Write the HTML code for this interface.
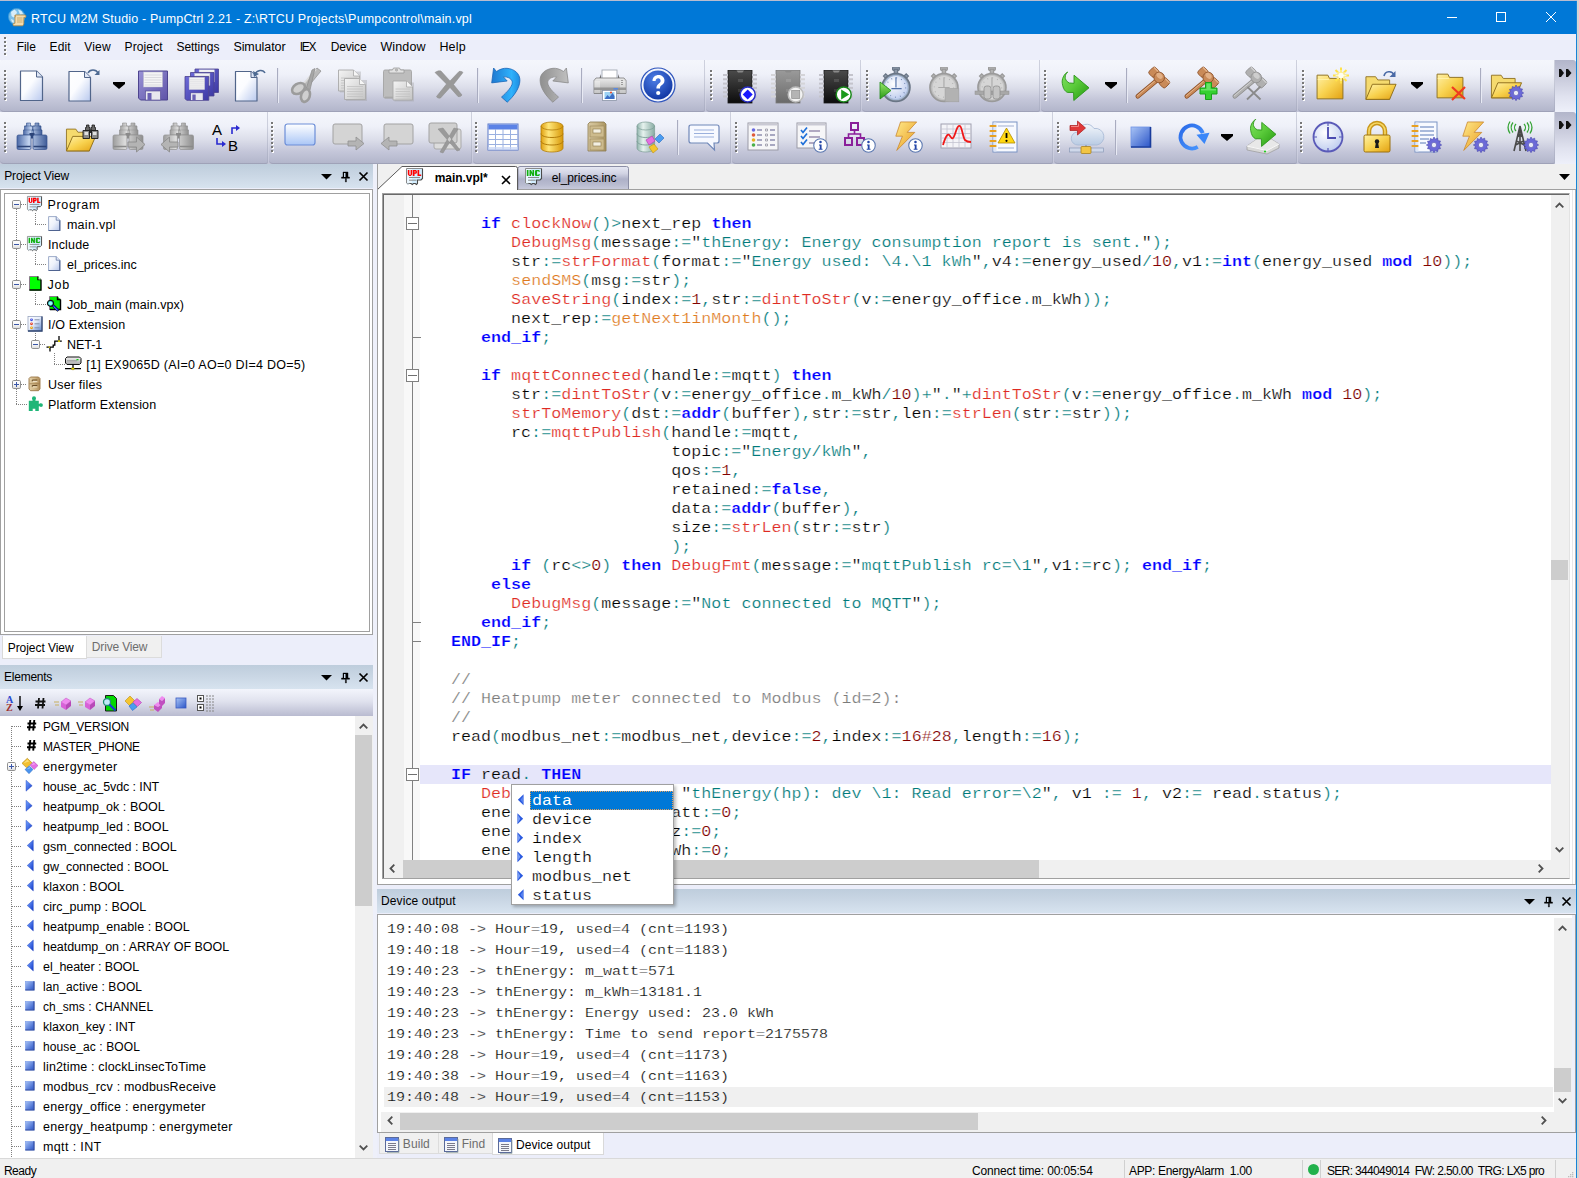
<!DOCTYPE html>
<html><head><meta charset="utf-8"><title>RTCU M2M Studio</title>
<style>
*{box-sizing:border-box;margin:0;padding:0}
html,body{width:1579px;height:1178px;overflow:hidden;background:#d4d4d4}
body{position:relative;font-family:"Liberation Sans",sans-serif;font-size:12.5px;letter-spacing:.25px;color:#000}
.abs,.win *{position:absolute}
.win{position:absolute;left:0;top:0;width:1577px;height:1178px;background:#eceefa;overflow:hidden}
svg{display:block;overflow:visible}
span{position:static !important}
/* top */
.strip{left:0;top:0;width:1579px;height:1px;background:#b9bccf}
.title{left:0;top:1px;width:1577px;height:33px;background:#0078d7}
.title .tt{left:31px;top:11px;color:#fff;font-size:12.5px;white-space:nowrap;letter-spacing:.18px}
.menubar{left:0;top:34px;width:1577px;height:26px;background:#eceefa}
.mi{white-space:nowrap}
.grip{width:3px;height:31px;background:repeating-linear-gradient(180deg,#777 0,#777 2px,transparent 2px,transparent 4px) 0 0/2px 100% no-repeat,repeating-linear-gradient(180deg,transparent 0,transparent 1px,#fff 1px,#fff 3px,transparent 3px,transparent 4px) 1px 0/2px 100% no-repeat}
.mgrip{left:4px;top:3px;width:3px;height:19px;background:repeating-linear-gradient(180deg,#777 0,#777 2px,transparent 2px,transparent 4px) 0 0/2px 100% no-repeat,repeating-linear-gradient(180deg,transparent 0,transparent 1px,#fff 1px,#fff 3px,transparent 3px,transparent 4px) 1px 0/2px 100% no-repeat}
.tbbg{left:0;top:60px;width:1577px;height:104px;background:linear-gradient(180deg,#f6f8fd 0,#eef0f8 13px,#dfe1ed 26px,#ced0e0 39px,#c4c6d9 51px,#c4c6d9 52px,#f6f8fd 52px,#eef0f8 65px,#dfe1ed 78px,#ced0e0 91px,#c4c6d9 104px)}
.band{background:linear-gradient(180deg,#f4f6fc 0%,#eff1f9 28%,#dcdeea 54%,#c4c6d9 78%,#b3b6cb 100%);border-radius:4px 0 2px 4px;border-bottom:1px solid #9fa2b8;box-shadow:inset -1px 0 0 rgba(160,163,185,.45)}
.tsep{width:1px;height:35px;background:#a9acc0;box-shadow:1px 0 0 #e8eaf4}
.tdd{width:12px;height:7px;background:#000;clip-path:polygon(0 0,100% 0,100% 28%,50% 100%,0 28%)}
.tic{width:32px;height:32px}
.chev{left:1555px;width:21px;background:linear-gradient(180deg,#b2b5ca 0%,#c9cbdc 35%,#e0e2ef 70%,#eef0fa 100%);border-radius:0 3px 0 0}
/* panels */
.phead{height:24px;background:linear-gradient(180deg,#becddc 0%,#c9d6e4 45%,#d7e3ef 100%)}
.phead .ph{white-space:nowrap}
.tl{white-space:nowrap;line-height:20px;height:20px}
.ti{width:16px;height:16px}
.exp{width:9px;height:9px}
.hdot{height:1px;background:repeating-linear-gradient(90deg,#808080 0,#808080 1px,transparent 1px,transparent 2px)}
.vdot{width:1px;background:repeating-linear-gradient(180deg,#808080 0,#808080 1px,transparent 1px,transparent 2px)}
/* editor */
.code{letter-spacing:0;font-family:"Liberation Mono",monospace;font-size:14.5px;white-space:pre}
.ln{-webkit-text-stroke:.22px #fff;left:36.6px;height:19px;line-height:20px;transform-origin:0 0;transform:scaleX(1.1505)}
.curln{left:36px;width:1131px;height:19px;background:#e6e6fa}
.kw{color:#0000ff;font-weight:bold}
.fr{color:#de2a22}
.fo{color:#de7a1e}
.st{color:#007a7a}
.op{color:#007a7a}
.nu{color:#800000}
.cm{color:#7a7a7a}
.fbox{left:22px;width:13px;height:13px;border:1px solid #808080;background:#fff}
.fbox:after{content:"";position:absolute;left:1px;top:5px;width:9px;height:1px;background:#707070}
.ftick{left:29px;width:8px;height:1px;background:#808080}
.sb{background:#f0f0f0}
.thumb{background:#cdcdcd}
.arr{font-size:10px;color:#505050}
/* output */
.ol{-webkit-text-stroke:.22px #fff;letter-spacing:0;left:387.2px;height:21px;line-height:21px;font-family:"Liberation Mono",monospace;font-size:13px;white-space:pre;transform-origin:0 0;transform:scaleX(1.1538)}
.olsel{left:384px;width:1169px;height:20px;background:#f0f0f0}
/* popup */
.popup{left:511px;top:784px;width:163px;height:121px;background:#fff;border:1px solid #a0a0a0;box-shadow:2px 2px 3px rgba(0,0,0,.25)}
.pi{left:5px;width:8px;height:12px}
.pt{-webkit-text-stroke:.22px #fff;letter-spacing:0;left:20px;height:19px;line-height:20px;font-family:"Liberation Mono",monospace;font-size:14.5px;white-space:pre;transform-origin:0 0;transform:scaleX(1.1494)}
.pt.psel{color:#fff;-webkit-text-stroke:0 transparent}
.pselbg{left:18px;width:143px;height:19px;background:#0078d7;outline:1px dotted #e0a060;outline-offset:-1px}
/* status */
.status{left:0;top:1158px;width:1577px;height:20px;background:#f0f0f0;border-top:1px solid #d9d9d9}
.status .sl{white-space:nowrap}

.u{-webkit-text-stroke:0 transparent}

</style></head>
<body>
<svg width="0" height="0" style="position:absolute"><defs>
<linearGradient id="gPage" x1="0" y1="0" x2="1" y2="1"><stop offset="0" stop-color="#fff"/><stop offset=".45" stop-color="#fbfcff"/><stop offset="1" stop-color="#b9c9ee"/></linearGradient>
<linearGradient id="gPageG" x1="0" y1="0" x2="1" y2="1"><stop offset="0" stop-color="#f4f4f4"/><stop offset="1" stop-color="#c4c4c4"/></linearGradient>
<linearGradient id="gPurple" x1="0" y1="0" x2="1" y2="1"><stop offset="0" stop-color="#9a93d6"/><stop offset="1" stop-color="#5e53a8"/></linearGradient>
<linearGradient id="gPurple2" x1="0" y1="0" x2="1" y2="1"><stop offset="0" stop-color="#6d6ad8"/><stop offset="1" stop-color="#3d39a4"/></linearGradient>
<linearGradient id="gBlue" x1="0" y1="0" x2="0" y2="1"><stop offset="0" stop-color="#5b9bea"/><stop offset="1" stop-color="#1d5fc4"/></linearGradient>
<linearGradient id="gUndo" x1="0" y1="0" x2="1" y2="0"><stop offset="0" stop-color="#1e78d0"/><stop offset=".7" stop-color="#2fb2fc"/><stop offset="1" stop-color="#1e8ce0"/></linearGradient>
<linearGradient id="gRedo" x1="0" y1="0" x2="1" y2="0"><stop offset="0" stop-color="#c0c0c0"/><stop offset=".6" stop-color="#a2a2a2"/><stop offset="1" stop-color="#909090"/></linearGradient>
<radialGradient id="gHelp" cx=".4" cy=".3" r=".8"><stop offset="0" stop-color="#4f7fe6"/><stop offset="1" stop-color="#0a2f9c"/></radialGradient>
<linearGradient id="gGold" x1="0" y1="0" x2="1" y2="1"><stop offset="0" stop-color="#fff1a8"/><stop offset=".5" stop-color="#f8d24f"/><stop offset="1" stop-color="#e2a112"/></linearGradient>
<linearGradient id="gGoldH" x1="0" y1="0" x2="1" y2="0"><stop offset="0" stop-color="#e0a010"/><stop offset=".35" stop-color="#ffe77a"/><stop offset="1" stop-color="#d89808"/></linearGradient>
<linearGradient id="gTealH" x1="0" y1="0" x2="1" y2="0"><stop offset="0" stop-color="#8fb3ab"/><stop offset=".35" stop-color="#e6f2ee"/><stop offset="1" stop-color="#87aba3"/></linearGradient>
<linearGradient id="gGray" x1="0" y1="0" x2="0" y2="1"><stop offset="0" stop-color="#ececec"/><stop offset="1" stop-color="#a6a6a6"/></linearGradient>
<linearGradient id="gGrayH" x1="0" y1="0" x2="1" y2="0"><stop offset="0" stop-color="#9c9c9c"/><stop offset=".4" stop-color="#dcdcdc"/><stop offset="1" stop-color="#8e8e8e"/></linearGradient>
<linearGradient id="gGreen" x1="0" y1="0" x2="0" y2="1"><stop offset="0" stop-color="#9ae86a"/><stop offset="1" stop-color="#2a9a18"/></linearGradient>
<linearGradient id="gSteelH" x1="0" y1="0" x2="1" y2="0"><stop offset="0" stop-color="#4a68a6"/><stop offset=".4" stop-color="#c3d4f0"/><stop offset="1" stop-color="#3f5c98"/></linearGradient>
<linearGradient id="gWood" x1="0" y1="0" x2="1" y2="1"><stop offset="0" stop-color="#e2b08a"/><stop offset="1" stop-color="#99552c"/></linearGradient>
<linearGradient id="gChip" x1="0" y1="0" x2="0" y2="1"><stop offset="0" stop-color="#4a4a4a"/><stop offset="1" stop-color="#0c0c0c"/></linearGradient>
<linearGradient id="gChipG" x1="0" y1="0" x2="0" y2="1"><stop offset="0" stop-color="#9a9a9a"/><stop offset="1" stop-color="#6a6a6a"/></linearGradient>
<linearGradient id="gRect" x1="0" y1="0" x2="0" y2="1"><stop offset="0" stop-color="#ffffff"/><stop offset="1" stop-color="#aac6f6"/></linearGradient>
<linearGradient id="gTan" x1="0" y1="0" x2="1" y2="0"><stop offset="0" stop-color="#d8c9a2"/><stop offset=".5" stop-color="#c9b789"/><stop offset="1" stop-color="#a8935f"/></linearGradient>
<radialGradient id="gClock" cx=".4" cy=".35" r=".7"><stop offset="0" stop-color="#ffffff"/><stop offset="1" stop-color="#bccbee"/></radialGradient>
<linearGradient id="gSq" x1="0" y1="0" x2="1" y2="1"><stop offset="0" stop-color="#a9c4f5"/><stop offset="1" stop-color="#2b55c8"/></linearGradient>
<linearGradient id="gBolt" x1="0" y1="0" x2="1" y2="1"><stop offset="0" stop-color="#ffe98a"/><stop offset="1" stop-color="#e89a1e"/></linearGradient>
<symbol id="sGear" viewBox="0 0 14 14"><path d="M7 0l1.2 1.9 2-.9.3 2.2 2.2.3-.9 2L13.700 7l-1.900 1.200.9 2-2.200.3-.3 2.200-2-.9L7 13.700 5.800 11.800l-2 .9-.3-2.200-2.200-.3.9-2L.300 7l1.900-1.200-.9-2 2.200-.3.3-2.200 2 .9z" fill="#6b69d8" stroke="#4442a8" stroke-width=".5"/><circle cx="7" cy="7" r="2.300" fill="#e9ebf7" stroke="#4442a8" stroke-width=".5"/></symbol>
<symbol id="sInfo" viewBox="0 0 14 14"><circle cx="7" cy="7" r="6.300" fill="#fff" stroke="#5b78b0" stroke-width="1"/><circle cx="7" cy="3.800" r="1.200" fill="#2446a8"/><path d="M5.600 6h2.400v4h.9v1H5.300v-1h1V7h-.7z" fill="#2446a8"/></symbol>
<symbol id="sBino" viewBox="0 0 32 32"><path d="M10.500 2h4v3h2v4h1v5h-10V9h1V5h2zM19 2h4v3h2v4h1v5h-10V9h1V5h2z" fill="url(#gSteelH)" stroke="#34508c" stroke-width=".6"/><path d="M8.500 5h8M17 5h8M7.500 9h10M16 9h10" stroke="#34508c" stroke-width=".6" opacity=".7"/><rect x="13.500" y="12" width="5" height="5.500" fill="#2c4478"/><path d="M1 15.500q0-1.500 1.500-1.500h11q1.500 0 1.500 1.500V27q0 1.500-1.500 1.500h-11q-1.500 0-1.500-1.500zM17 15.500q0-1.500 1.500-1.500h11q1.500 0 1.500 1.500V27q0 1.500-1.500 1.500h-11q-1.500 0-1.500-1.500z" fill="url(#gSteelH)" stroke="#34508c" stroke-width=".7"/><path d="M1.500 25.500h13M17.500 25.500h13" stroke="#2c4478" stroke-width="1.600"/></symbol>
<symbol id="sBinoG" viewBox="0 0 32 32"><path d="M10.500 2h4v3h2v4h1v5h-10V9h1V5h2zM19 2h4v3h2v4h1v5h-10V9h1V5h2z" fill="url(#gGrayH)" stroke="#909090" stroke-width=".6"/><path d="M8.500 5h8M17 5h8M7.500 9h10M16 9h10" stroke="#909090" stroke-width=".6" opacity=".7"/><rect x="13.500" y="12" width="5" height="5.500" fill="#8a8a8a"/><path d="M1 15.500q0-1.500 1.500-1.500h11q1.500 0 1.500 1.500V27q0 1.500-1.500 1.500h-11q-1.500 0-1.500-1.500zM17 15.500q0-1.500 1.500-1.500h11q1.500 0 1.500 1.500V27q0 1.500-1.500 1.500h-11q-1.500 0-1.500-1.500z" fill="url(#gGrayH)" stroke="#909090" stroke-width=".7"/><path d="M1.500 25.500h13M17.500 25.500h13" stroke="#8a8a8a" stroke-width="1.600"/></symbol>
<symbol id="sFolderOpen" viewBox="0 0 30 26"><path d="M1 3h9l2 3h11v18H1z" fill="#f5da6e" stroke="#96782a" stroke-width=".9"/><path d="M7 10h22l-6 14H1z" fill="url(#gGold)" stroke="#8f6e1c" stroke-width=".9"/></symbol>
<symbol id="sFolder" viewBox="0 0 26 24"><path d="M1 1h10l1.500 3h12.500v19H1z" fill="url(#gGold)" stroke="#8f7220" stroke-width=".9"/><path d="M1.500 5h10.500" stroke="#fff3b0" stroke-width=".8"/></symbol>
<symbol id="sGavel" viewBox="0 0 26 26"><path d="M2 23L15 8l2.500 2.200L4.500 25.200z" stroke-width=".6"/><path d="M11 5l5-4 9 9-4 5z" stroke-width=".6"/><path d="M13.500 3l9 9" stroke-width="1" fill="none" opacity=".35"/></symbol>
<symbol id="sWatch" viewBox="0 0 28 32"><rect x="11" y="0" width="6" height="3" rx="1"/><rect x="12.500" y="2" width="3" height="4"/><path d="M3 8l2-2 2 2-2 2zM25 8l-2-2-2 2 2 2z"/><circle cx="14" cy="18" r="12.300" stroke-width="1.400"/></symbol>
</defs></svg><div class="win">
<div class="strip"></div>
<div class="title">
  <div class="abs" style="left:8px;top:7px"><svg width="18" height="18" viewBox="0 0 18 18"><circle cx="8.700" cy="8.700" r="8.200" fill="#7cc0ea" stroke="#3e9ad6" stroke-width=".9"/><path d="M3 4l3.500-2.500 2.500 2.500-1 3-2.500 2.500L3.500 8zM10 1.500l3.500 1.500 1.500 3-3 .5zM3 11l2.500 1 .5 3-2-1z" fill="#e8f5fc" opacity=".85"/><path d="M7 7h10.500l.5 1.200-.5 1.200h-1.700V16l-1 1.800H5.500L5 16.500l.5-1.200H7z" fill="#f3dcae" stroke="#b88a42" stroke-width=".8"/><path d="M7 7q1.200 1.200 0 2.400" fill="none" stroke="#b88a42" stroke-width=".7"/><path d="M9 10h5.500M9 12h5.500M9 14h5.500" stroke="#caa566" stroke-width=".9"/></svg></div>
  <div class="tt">RTCU M2M Studio - PumpCtrl 2.21 - Z:\RTCU Projects\Pumpcontrol\main.vpl</div>
  <svg style="left:1443px;top:0" width="134" height="33" viewBox="0 0 134 33"><g stroke="#fff" stroke-width="1" fill="none"><path d="M4 16.5h10"/><rect x="53.5" y="11.5" width="9" height="9"/><path d="M103 11l10 10M113 11l-10 10"/></g></svg>
</div>
<div class="menubar"><div class="mgrip"></div>
<div class="mi" style="left:16.7px;top:6px;letter-spacing:-0.045px;font-size:12px;">File</div>
<div class="mi" style="left:49.6px;top:6px;letter-spacing:0.074px;font-size:12px;">Edit</div>
<div class="mi" style="left:84.2px;top:6px;letter-spacing:0.203px;font-size:12px;">View</div>
<div class="mi" style="left:124.6px;top:6px;letter-spacing:0.109px;font-size:12px;">Project</div>
<div class="mi" style="left:176.6px;top:6px;letter-spacing:-0.080px;font-size:12px;">Settings</div>
<div class="mi" style="left:233.4px;top:6px;letter-spacing:-0.074px;">Simulator</div>
<div class="mi" style="left:299.7px;top:6px;letter-spacing:-1.221px;font-size:12px;">IEX</div>
<div class="mi" style="left:330.7px;top:6px;letter-spacing:-0.156px;font-size:12px;">Device</div>
<div class="mi" style="left:380.4px;top:6px;letter-spacing:0.149px;">Window</div>
<div class="mi" style="left:439.4px;top:6px;letter-spacing:0.164px;">Help</div>
</div>
<div class="tbbg"></div>
<div class="band" style="left:0px;top:60px;width:705px;height:52px"></div>
<div class="band" style="left:706px;top:60px;width:155px;height:52px"></div>
<div class="band" style="left:862px;top:60px;width:178px;height:52px"></div>
<div class="band" style="left:1041px;top:60px;width:256px;height:52px"></div>
<div class="band" style="left:1298px;top:60px;width:257px;height:52px"></div><div class="band" style="left:0px;top:112px;width:268px;height:52px"></div>
<div class="band" style="left:269px;top:112px;width:203px;height:52px"></div>
<div class="band" style="left:473px;top:112px;width:258px;height:52px"></div>
<div class="band" style="left:732px;top:112px;width:321px;height:52px"></div>
<div class="band" style="left:1054px;top:112px;width:243px;height:52px"></div>
<div class="band" style="left:1298px;top:112px;width:257px;height:52px"></div>
<div class="chev" style="top:60px;height:52px"></div>
<div class="chev" style="top:112px;height:52px"></div>
<svg style="left:1559px;top:69px" width="13" height="8" viewBox="0 0 13 8"><path d="M0 0h2l3 4-3 4H0zM7 0h2l3.500 4L9 8H7z" fill="#111"/></svg>
<svg style="left:1559px;top:121px" width="13" height="8" viewBox="0 0 13 8"><path d="M0 0h2l3 4-3 4H0zM7 0h2l3.500 4L9 8H7z" fill="#111"/></svg>
<div class="grip" style="left:4px;top:70px"></div>
<div class="tic" style="left:16px;top:69px"><svg width="32" height="32" viewBox="0 0 32 32" preserveAspectRatio="none"><path d="M4.5 2h16l6 6v23.5H4.5z" fill="url(#gPage)" stroke="#51658a" stroke-width="1.200" stroke-linejoin="round"/><path d="M20.5 2v6h6" fill="#dfe7f7" stroke="#51658a" stroke-width="1"/></svg></div>
<div class="tic" style="left:68px;top:69px"><svg width="32" height="32" viewBox="0 0 32 32" preserveAspectRatio="none"><path d="M1 2.5h15.5l6 6v23.5H1z" fill="url(#gPage)" stroke="#51658a" stroke-width="1.200" stroke-linejoin="round"/><path d="M16.5 2.5v6h6" fill="#dfe7f7" stroke="#51658a" stroke-width="1"/><path d="M20 4c2-4 8-4 10 0" fill="none" stroke="#4e6a92" stroke-width="1.600"/><path d="M31.500 1v5h-5z" fill="#4e6a92"/></svg></div>
<div class="tdd" style="left:113px;top:82px"></div>
<div class="tic" style="left:137px;top:69px"><svg width="32" height="32" viewBox="0 0 32 32" preserveAspectRatio="none"><g transform="translate(1.5 2) scale(1)"><path d="M0 0h29v29H2l-2-2z" fill="url(#gPurple)" stroke="#4d448f" stroke-width="1"/><rect x="5" y="1" width="19" height="15" fill="#f4f4f4" stroke="#b8b8c8" stroke-width=".5"/><path d="M6 4h17M6 6.500h17M6 9h17M6 11.500h17M6 14h17" stroke="#cfcfd6" stroke-width=".7"/><rect x="7" y="20" width="15" height="9" fill="#e8e8ee" stroke="#4d448f" stroke-width=".6"/><rect x="9" y="22" width="4" height="7" fill="#6a60b4"/></g></svg></div>
<div class="tic" style="left:185px;top:69px"><svg width="32" height="32" viewBox="0 0 32 32" preserveAspectRatio="none"><g transform="translate(10 0) scale(0.81)"><path d="M0 0h29v29H2l-2-2z" fill="url(#gPurple2)" stroke="#4d448f" stroke-width="1"/><rect x="5" y="1" width="19" height="15" fill="#f4f4f4" stroke="#b8b8c8" stroke-width=".5"/><path d="M6 4h17M6 6.500h17M6 9h17M6 11.500h17M6 14h17" stroke="#cfcfd6" stroke-width=".7"/><rect x="7" y="20" width="15" height="9" fill="#e8e8ee" stroke="#4d448f" stroke-width=".6"/><rect x="9" y="22" width="4" height="7" fill="#6a60b4"/></g><g transform="translate(5.5 3.5) scale(0.81)"><path d="M0 0h29v29H2l-2-2z" fill="url(#gPurple2)" stroke="#4d448f" stroke-width="1"/><rect x="5" y="1" width="19" height="15" fill="#f4f4f4" stroke="#b8b8c8" stroke-width=".5"/><path d="M6 4h17M6 6.500h17M6 9h17M6 11.500h17M6 14h17" stroke="#cfcfd6" stroke-width=".7"/><rect x="7" y="20" width="15" height="9" fill="#e8e8ee" stroke="#4d448f" stroke-width=".6"/><rect x="9" y="22" width="4" height="7" fill="#6a60b4"/></g><g transform="translate(0 7.5) scale(0.82)"><path d="M0 0h29v29H2l-2-2z" fill="url(#gPurple2)" stroke="#4d448f" stroke-width="1"/><rect x="5" y="1" width="19" height="15" fill="#f4f4f4" stroke="#b8b8c8" stroke-width=".5"/><path d="M6 4h17M6 6.500h17M6 9h17M6 11.500h17M6 14h17" stroke="#cfcfd6" stroke-width=".7"/><rect x="7" y="20" width="15" height="9" fill="#e8e8ee" stroke="#4d448f" stroke-width=".6"/><rect x="9" y="22" width="4" height="7" fill="#6a60b4"/></g></svg></div>
<div class="tic" style="left:234px;top:69px"><svg width="32" height="32" viewBox="0 0 32 32" preserveAspectRatio="none"><path d="M1.5 2.5h15.5l6 6v23.5H1.5z" fill="url(#gPage)" stroke="#51658a" stroke-width="1.200" stroke-linejoin="round"/><path d="M17 2.5v6h6" fill="#dfe7f7" stroke="#51658a" stroke-width="1"/><path d="M21 5c2-4 8-5 10-1" fill="none" stroke="#4e6a92" stroke-width="1.500"/><path d="M19 2l1 6 5-3z" fill="#4e6a92"/></svg></div>
<div class="tsep" style="left:277px;top:68px"></div>
<div class="tic" style="left:290px;top:69px"><svg width="32" height="32" viewBox="0 0 32 32" preserveAspectRatio="none"><g stroke="#8c8c8c" stroke-width=".7"><path d="M27 -1l4 3L17 19l-4-2.500z" fill="#b9b9b9"/><path d="M25 0l2 .5L12 18l-1.500-1z" fill="#dcdcdc" stroke="none"/><path d="M22 1l3-1.500L20 21l-4.500 1z" fill="#a6a6a6"/><ellipse cx="8.500" cy="19.500" rx="7" ry="4.800" transform="rotate(-32 8.500 19.500)" fill="#cfcfcf" stroke="#9c9c9c" stroke-width="2.600"/><ellipse cx="15.500" cy="26.500" rx="4.300" ry="6.500" transform="rotate(18 15.500 26.500)" fill="#cfcfcf" stroke="#9c9c9c" stroke-width="2.600"/></g></svg></div>
<div class="tic" style="left:338px;top:69px"><svg width="32" height="32" viewBox="0 0 32 32" preserveAspectRatio="none"><path d="M2 2.5h21v21h-21z" fill="#9a9a9a" opacity=".35"/><path d="M0.5 1h15l6 6v15H0.5z" fill="url(#gPageG)" stroke="#a9a9a9" stroke-width=".9"/><path d="M15.5 1v6h6" fill="#f6f6f6" stroke="#a9a9a9" stroke-width=".8"/><path d="M3 9h16M3 11.5h16M3 14h16M3 16.5h16M3 19h16" stroke="#c2c2c2" stroke-width=".8"/><path d="M8 11h21v21h-21z" fill="#9a9a9a" opacity=".35"/><path d="M6.5 9.5h15l6 6v15H6.5z" fill="url(#gPageG)" stroke="#a9a9a9" stroke-width=".9"/><path d="M21.5 9.5v6h6" fill="#f6f6f6" stroke="#a9a9a9" stroke-width=".8"/><path d="M9 17.5h16M9 20h16M9 22.5h16M9 25h16M9 27.5h16" stroke="#c2c2c2" stroke-width=".8"/></svg></div>
<div class="tic" style="left:386px;top:69px"><svg width="32" height="32" viewBox="0 0 32 32" preserveAspectRatio="none"><rect x="-2.500" y="1" width="28" height="28" rx="1.500" fill="#bdbdbd" stroke="#a4a4a4" stroke-width=".9"/><rect x="-1" y="27.500" width="27" height="2" fill="#a0a0a0" opacity=".5"/><path d="M7.500 -1h6l1 2h3.500v3H3V1h3.500z" fill="#e2e2e2" stroke="#9a9a9a" stroke-width=".8"/><circle cx="10.500" cy="1" r="1.200" fill="#bdbdbd" stroke="#9a9a9a" stroke-width=".5"/><path d="M8.5 13.5h19.5v19h-19.5z" fill="#9a9a9a" opacity=".35"/><path d="M7 12h13.5l6 6v13H7z" fill="url(#gPageG)" stroke="#a9a9a9" stroke-width=".9"/><path d="M20.5 12v6h6" fill="#f6f6f6" stroke="#a9a9a9" stroke-width=".8"/><path d="M9.5 20h14.5M9.5 22.5h14.5M9.5 25h14.5M9.5 27.5h14.5M9.5 30h14.5" stroke="#c2c2c2" stroke-width=".8"/></svg></div>
<div class="tic" style="left:434px;top:69px"><svg width="32" height="32" viewBox="0 0 32 32" preserveAspectRatio="none"><path d="M1 3.500c2-1.500 4-2 6-1.500L16 12l9-9.500c1.500-.5 3 0 4 1L19.500 15.500 28 26c-1 1.500-2.500 2-4 1.500L16 18.500 6.500 29C5 29.500 3 29 2.500 27.500L12.500 15z" fill="#999" stroke="#8a8a8a" stroke-width=".5"/></svg></div>
<div class="tsep" style="left:477px;top:68px"></div>
<div class="tic" style="left:490px;top:69px"><svg width="32" height="32" viewBox="0 0 32 32" preserveAspectRatio="none"><g transform="translate(0 -1)"><path d="M3.600 0L6.500 3.500C10 1 14 0 17 .3C25 1 30 6 29.900 12.400C29.800 20 24 28 17.200 34.200L11.500 29.100C17 24 22 19 22.300 14.900C22.500 11 18 8.500 13.400 8.900L17.200 13L1.700 14.900Z" fill="url(#gUndo)" stroke="#1a66b8" stroke-width=".8" stroke-linejoin="round"/></g></svg></div>
<div class="tic" style="left:538px;top:69px"><svg width="32" height="32" viewBox="0 0 32 32" preserveAspectRatio="none"><g transform="translate(32 -1) scale(-1 1)"><path d="M3.600 0L6.500 3.500C10 1 14 0 17 .3C25 1 30 6 29.900 12.400C29.800 20 24 28 17.200 34.200L11.500 29.100C17 24 22 19 22.300 14.900C22.500 11 18 8.500 13.400 8.900L17.200 13L1.700 14.900Z" fill="url(#gRedo)" stroke="#8a8a8a" stroke-width=".8" stroke-linejoin="round"/></g></svg></div>
<div class="tsep" style="left:581px;top:68px"></div>
<div class="tic" style="left:594px;top:69px"><svg width="32" height="32" viewBox="0 0 32 32" preserveAspectRatio="none"><rect x="8" y="1" width="15" height="10" fill="#fff" stroke="#9aa0aa" stroke-width=".8"/><path d="M5.500 9L7 5v4zM25.500 9L24 5v4z" fill="#6a6a6a"/><path d="M2 9h28l2 2.500V24.500H0V11.500z" fill="url(#gGray)" stroke="#7c7c7c" stroke-width=".8"/><path d="M0 12h6v12H0zM26 12h6v12h-6z" fill="#fff" opacity=".35"/><rect x="0" y="18.500" width="32" height="2.500" fill="#8a8a8a" opacity=".8"/><rect x="19.500" y="19" width="4.500" height="1.600" fill="#5a8ae0"/><path d="M27 11.500h2M27 13.500h2M27 15.500h2" stroke="#8a8a8a" stroke-width=".8"/><rect x="8.500" y="21.500" width="14" height="10" fill="#fff" stroke="#8a93a6" stroke-width=".8"/><rect x="10.500" y="23" width="10" height="7" fill="#9cd2f4"/><path d="M10.500 30l3-4 2 2 3-4 2 3v3z" fill="#3d6fc6"/><circle cx="17" cy="23.500" r="1.100" fill="#e85030"/></svg></div>
<div class="tic" style="left:642px;top:69px"><svg width="32" height="32" viewBox="0 0 32 32" preserveAspectRatio="none"><circle cx="16" cy="16" r="17" fill="#f2f5fd" stroke="#2f55bc" stroke-width="1.200"/><circle cx="16" cy="16" r="14.500" fill="url(#gHelp)"/><path d="M10.500 12c0-4 3-6 6-6s6 2 6 5.500c0 3-2 4-3.200 5-1 .8-1.300 1.500-1.300 3h-3.600c0-2.500.6-3.600 2.200-4.800 1.300-1 2-1.600 2-3 0-1.500-1-2.400-2.400-2.400-1.600 0-2.500 1-2.600 2.700z" fill="#fff"/><circle cx="16.200" cy="24" r="2.100" fill="#fff"/></svg></div>
<div class="grip" style="left:710px;top:70px"></div>
<div class="tic" style="left:725px;top:69px"><svg width="32" height="32" viewBox="0 0 32 32" preserveAspectRatio="none"><g transform="translate(1 0)"><rect x="2" y="1.500" width="24" height="32.500" fill="url(#gChip)" stroke="#1a1a1a" stroke-width=".8"/><path d="M10.500 1.500l1.500 2h4.500l1.500-2z" fill="#8a8a8a"/><rect x="-3" y="5" width="5" height="2" fill="#c4c4cc"/><rect x="26" y="5" width="5" height="2" fill="#c4c4cc"/><rect x="-3" y="9.3" width="5" height="2" fill="#c4c4cc"/><rect x="26" y="9.3" width="5" height="2" fill="#c4c4cc"/><rect x="-3" y="13.6" width="5" height="2" fill="#c4c4cc"/><rect x="26" y="13.6" width="5" height="2" fill="#c4c4cc"/><rect x="-3" y="17.9" width="5" height="2" fill="#c4c4cc"/><rect x="26" y="17.9" width="5" height="2" fill="#c4c4cc"/><rect x="-3" y="22.2" width="5" height="2" fill="#c4c4cc"/><rect x="26" y="22.2" width="5" height="2" fill="#c4c4cc"/><rect x="-3" y="26.5" width="5" height="2" fill="#c4c4cc"/><rect x="26" y="26.5" width="5" height="2" fill="#c4c4cc"/><rect x="12" y="10" width="5" height="3" fill="#ffffff" opacity=".12"/><rect x="12" y="20" width="5" height="3" fill="#ffffff" opacity=".1"/></g><circle cx="22.700" cy="25.500" r="7.500" fill="#fff" stroke="#2a2fc8" stroke-width="1.500"/><path d="M22.700 20.500l5 5-5 5-5-5z" fill="#1a1aff"/></svg></div>
<div class="tic" style="left:773px;top:69px"><svg width="32" height="32" viewBox="0 0 32 32" preserveAspectRatio="none"><g transform="translate(1 0)"><rect x="2" y="1.500" width="24" height="32.500" fill="url(#gChipG)" stroke="#7a7a7a" stroke-width=".8"/><path d="M10.500 1.500l1.500 2h4.500l1.500-2z" fill="#8a8a8a"/><rect x="-3" y="5" width="5" height="2" fill="#d4d4d8"/><rect x="26" y="5" width="5" height="2" fill="#d4d4d8"/><rect x="-3" y="9.3" width="5" height="2" fill="#d4d4d8"/><rect x="26" y="9.3" width="5" height="2" fill="#d4d4d8"/><rect x="-3" y="13.6" width="5" height="2" fill="#d4d4d8"/><rect x="26" y="13.6" width="5" height="2" fill="#d4d4d8"/><rect x="-3" y="17.9" width="5" height="2" fill="#d4d4d8"/><rect x="26" y="17.9" width="5" height="2" fill="#d4d4d8"/><rect x="-3" y="22.2" width="5" height="2" fill="#d4d4d8"/><rect x="26" y="22.2" width="5" height="2" fill="#d4d4d8"/><rect x="-3" y="26.5" width="5" height="2" fill="#d4d4d8"/><rect x="26" y="26.5" width="5" height="2" fill="#d4d4d8"/><rect x="12" y="10" width="5" height="3" fill="#ffffff" opacity=".12"/><rect x="12" y="20" width="5" height="3" fill="#ffffff" opacity=".1"/></g><circle cx="22.700" cy="25.500" r="7.500" fill="#f2f2f2" stroke="#bcbcbc" stroke-width="1.500"/><rect x="18.700" y="21.500" width="8" height="8" fill="#b4b4b4" stroke="#8e8e8e" stroke-width=".7"/></svg></div>
<div class="tic" style="left:821px;top:69px"><svg width="32" height="32" viewBox="0 0 32 32" preserveAspectRatio="none"><g transform="translate(1 0)"><rect x="2" y="1.500" width="24" height="32.500" fill="url(#gChip)" stroke="#1a1a1a" stroke-width=".8"/><path d="M10.500 1.500l1.500 2h4.500l1.500-2z" fill="#8a8a8a"/><rect x="-3" y="5" width="5" height="2" fill="#c4c4cc"/><rect x="26" y="5" width="5" height="2" fill="#c4c4cc"/><rect x="-3" y="9.3" width="5" height="2" fill="#c4c4cc"/><rect x="26" y="9.3" width="5" height="2" fill="#c4c4cc"/><rect x="-3" y="13.6" width="5" height="2" fill="#c4c4cc"/><rect x="26" y="13.6" width="5" height="2" fill="#c4c4cc"/><rect x="-3" y="17.9" width="5" height="2" fill="#c4c4cc"/><rect x="26" y="17.9" width="5" height="2" fill="#c4c4cc"/><rect x="-3" y="22.2" width="5" height="2" fill="#c4c4cc"/><rect x="26" y="22.2" width="5" height="2" fill="#c4c4cc"/><rect x="-3" y="26.5" width="5" height="2" fill="#c4c4cc"/><rect x="26" y="26.5" width="5" height="2" fill="#c4c4cc"/><rect x="12" y="10" width="5" height="3" fill="#ffffff" opacity=".12"/><rect x="12" y="20" width="5" height="3" fill="#ffffff" opacity=".1"/></g><circle cx="22.700" cy="25.500" r="7.500" fill="#fff" stroke="#1c8a1c" stroke-width="1.500"/><path d="M20.200 20.500l8 5-8 5z" fill="#1a9a1a"/></svg></div>
<div class="grip" style="left:866px;top:70px"></div>
<div class="tic" style="left:880px;top:69px"><svg width="32" height="32" viewBox="0 0 32 32" preserveAspectRatio="none"><g transform="translate(0 -2) scale(1.140)"><use href="#sWatch" width="28" height="32" fill="#8c98a8" stroke="#6a7686"/><circle cx="14" cy="18" r="10.500" fill="url(#gClock)" stroke="#a9bcd8" stroke-width="1"/><path d="M14 9v9M10 19h9" stroke="#5070a8" stroke-width="1"/><circle cx="14" cy="18" r="8.500" fill="none" stroke="#6f86b0" stroke-width="1" stroke-dasharray=".8 3.650"/></g><path d="M0 13l11 8.500-11 8.500z" fill="url(#gGreen)" stroke="#1f8a14" stroke-width=".8"/></svg></div>
<div class="tic" style="left:928px;top:69px"><svg width="32" height="32" viewBox="0 0 32 32" preserveAspectRatio="none"><g transform="translate(0 -2) scale(1.140)"><use href="#sWatch" width="28" height="32" fill="#b2b2b2" stroke="#9a9a9a"/><circle cx="14" cy="18" r="10.500" fill="#d6d6d6" stroke="#c4c4c4" stroke-width="1"/><path d="M14 9v9M9 18h10" stroke="#aaa" stroke-width="1"/><circle cx="14" cy="18" r="8.500" fill="none" stroke="#b0b0b0" stroke-width="1" stroke-dasharray=".8 3.650"/><rect x="15" y="19" width="12" height="11.500" fill="#b2b2b2" stroke="#a2a2a2" stroke-width=".6"/></g></svg></div>
<div class="tic" style="left:976px;top:69px"><svg width="32" height="32" viewBox="0 0 32 32" preserveAspectRatio="none"><g transform="translate(0 -2) scale(1.140)"><use href="#sWatch" width="28" height="32" fill="#b2b2b2" stroke="#9a9a9a"/><circle cx="14" cy="18" r="10.500" fill="#d6d6d6" stroke="#c4c4c4" stroke-width="1"/><path d="M14 9v9" stroke="#aaa" stroke-width="1"/><circle cx="14" cy="18" r="8.500" fill="none" stroke="#b0b0b0" stroke-width="1" stroke-dasharray=".8 3.650"/></g><rect x="-1" y="22" width="34" height="3.500" fill="#a8a8a8" stroke="#909090" stroke-width=".5"/><rect x="8" y="17" width="7" height="13" rx="2.500" fill="#c4c4c4" stroke="#8e8e8e" stroke-width=".8"/><rect x="17" y="17" width="7" height="13" rx="2.500" fill="#c4c4c4" stroke="#8e8e8e" stroke-width=".8"/></svg></div>
<div class="grip" style="left:1044px;top:70px"></div>
<div class="tic" style="left:1059px;top:69px"><svg width="32" height="32" viewBox="0 0 32 32" preserveAspectRatio="none"><defs><linearGradient id="gGo" x1="0" y1="0" x2="1" y2="1"><stop offset="0" stop-color="#7ee060"/><stop offset=".45" stop-color="#5ccc3c"/><stop offset="1" stop-color="#22980e"/></linearGradient></defs><path d="M8.700 3C5 5 2.500 10 3.300 14.500C4 19.500 6 22.500 8.500 23.400L14.600 23.500L14.800 31.500L30 18.800L15 6.200L15 14.300L10.200 14C7.500 12.500 6 10 6.200 8.200C6.300 6 7 4.500 8.700 3Z" fill="url(#gGo)" stroke="#2a9418" stroke-width=".9" stroke-linejoin="round"/></svg></div>
<div class="tdd" style="left:1105px;top:82px"></div>
<div class="tsep" style="left:1126px;top:68px"></div>
<div class="tic" style="left:1136px;top:69px"><svg width="32" height="32" viewBox="0 0 32 32" preserveAspectRatio="none"><path d="M1.800 27.300L19.500 12.500" stroke="#8a4e26" stroke-width="4.600" stroke-linecap="round"/><path d="M1.800 27.300L19.500 12.500" stroke="#c98a58" stroke-width="3" stroke-linecap="round"/><path d="M1.500 26.600L18.500 12.300" stroke="#ecc09a" stroke-width="1" stroke-linecap="round" opacity=".8"/><g transform="translate(23.200 8.500) rotate(45)"><rect x="-11.500" y="-4.500" width="8" height="9" rx="2.200" fill="#c98a58" stroke="#8a4e26" stroke-width=".8"/><rect x="3.500" y="-4.500" width="8" height="9" rx="2.200" fill="#c98a58" stroke="#8a4e26" stroke-width=".8"/><circle cx="0" cy="0" r="5.300" fill="#c98a58" stroke="#8a4e26" stroke-width=".8"/><ellipse cx="-1" cy="-1.500" rx="3.500" ry="2.500" fill="#ecc09a" opacity=".7"/><path d="M-11 -3.500h6M5 -3.500h6" stroke="#ecc09a" stroke-width="1.200" opacity=".8"/></g></svg></div>
<div class="tic" style="left:1185px;top:69px"><svg width="32" height="32" viewBox="0 0 32 32" preserveAspectRatio="none"><path d="M1.800 27.300L19.500 12.500" stroke="#8a4e26" stroke-width="4.600" stroke-linecap="round"/><path d="M1.800 27.300L19.500 12.500" stroke="#c98a58" stroke-width="3" stroke-linecap="round"/><path d="M1.500 26.600L18.500 12.300" stroke="#ecc09a" stroke-width="1" stroke-linecap="round" opacity=".8"/><g transform="translate(23.200 8.500) rotate(45)"><rect x="-11.500" y="-4.500" width="8" height="9" rx="2.200" fill="#c98a58" stroke="#8a4e26" stroke-width=".8"/><rect x="3.500" y="-4.500" width="8" height="9" rx="2.200" fill="#c98a58" stroke="#8a4e26" stroke-width=".8"/><circle cx="0" cy="0" r="5.300" fill="#c98a58" stroke="#8a4e26" stroke-width=".8"/><ellipse cx="-1" cy="-1.500" rx="3.500" ry="2.500" fill="#ecc09a" opacity=".7"/><path d="M-11 -3.500h6M5 -3.500h6" stroke="#ecc09a" stroke-width="1.200" opacity=".8"/></g><path d="M20.500 13.500h6v5.500h5.500v6h-5.500v5.500h-6v-5.500h-5.500v-6h5.500z" fill="#35d030" stroke="#18a018" stroke-width="1"/><path d="M21.500 14.500h4v5.500h5.500v1.500h-15v-1.500h5.500z" fill="#8af088" opacity=".6"/></svg></div>
<div class="tic" style="left:1233px;top:69px"><svg width="32" height="32" viewBox="0 0 32 32" preserveAspectRatio="none"><path d="M1.800 27.300L19.500 12.500" stroke="#8e8e8e" stroke-width="4.600" stroke-linecap="round"/><path d="M1.800 27.300L19.500 12.500" stroke="#b0b0b0" stroke-width="3" stroke-linecap="round"/><path d="M1.500 26.600L18.500 12.300" stroke="#dcdcdc" stroke-width="1" stroke-linecap="round" opacity=".8"/><g transform="translate(23.200 8.500) rotate(45)"><rect x="-11.500" y="-4.500" width="8" height="9" rx="2.200" fill="#b0b0b0" stroke="#8e8e8e" stroke-width=".8"/><rect x="3.500" y="-4.500" width="8" height="9" rx="2.200" fill="#b0b0b0" stroke="#8e8e8e" stroke-width=".8"/><circle cx="0" cy="0" r="5.300" fill="#b0b0b0" stroke="#8e8e8e" stroke-width=".8"/><ellipse cx="-1" cy="-1.500" rx="3.500" ry="2.500" fill="#dcdcdc" opacity=".7"/><path d="M-11 -3.500h6M5 -3.500h6" stroke="#dcdcdc" stroke-width="1.200" opacity=".8"/></g><path d="M14.500 18l13 12.500M27.500 17.500L14 30.500" stroke="#8a8a8a" stroke-width="1.800"/></svg></div>
<div class="grip" style="left:1302px;top:70px"></div>
<div class="tic" style="left:1315px;top:69px"><svg width="32" height="32" viewBox="0 0 32 32" preserveAspectRatio="none"><use href="#sFolder" x="1" y="5" width="28" height="26"/><path d="M26 -1.500v16M18 6.500h16M20.500 1l11 11M31.500 1l-11 11" stroke="#ffe24a" stroke-width="2"/><path d="M26 1v11M20.500 6.500h11M22.500 3l7 7M29.500 3l-7 7" stroke="#fff8c8" stroke-width="1"/><circle cx="26" cy="6.500" r="2.800" fill="#fffef0"/></svg></div>
<div class="tic" style="left:1364px;top:69px"><svg width="32" height="32" viewBox="0 0 32 32" preserveAspectRatio="none"><use href="#sFolderOpen" x="-1" y="4.500" width="36" height="28"/><path d="M20 7c1-5 8-6 10-1" fill="none" stroke="#4a6aa6" stroke-width="1.600"/><path d="M31.500 2v6h-6z" fill="#4a6aa6"/></svg></div>
<div class="tdd" style="left:1411px;top:82px"></div>
<div class="tic" style="left:1436px;top:69px"><svg width="32" height="32" viewBox="0 0 32 32" preserveAspectRatio="none"><use href="#sFolder" x="0" y="4" width="28" height="26"/><path d="M16 18l13 12M29 18L16 31" stroke="#f03a20" stroke-width="2.200"/></svg></div>
<div class="tsep" style="left:1480px;top:68px"></div>
<div class="tic" style="left:1492px;top:69px"><svg width="32" height="32" viewBox="0 0 32 32" preserveAspectRatio="none"><use href="#sFolderOpen" x="-2" y="3" width="33" height="28"/><use href="#sGear" x="16" y="16" width="16" height="16"/></svg></div>
<div class="grip" style="left:4px;top:122px"></div>
<div class="tic" style="left:16px;top:121px"><svg width="32" height="32" viewBox="0 0 32 32" preserveAspectRatio="none"><use href="#sBino" x="0" y="0" width="32" height="32"/></svg></div>
<div class="tic" style="left:64px;top:121px"><svg width="32" height="32" viewBox="0 0 32 32" preserveAspectRatio="none"><use href="#sFolderOpen" x="0" y="5" width="34" height="27"/><g transform="translate(18.500 3.500) scale(.5)"><path d="M8 1h5v5h2v6H6V6h2zM19 1h5v5h2v6h-9V6h2z" fill="#666" stroke="#1a1a1a" stroke-width="1.600"/><rect x="13" y="10" width="6" height="7" fill="#2a2a2a"/><path d="M1 12h13v16H1zM18 12h13v16H18z" fill="#8a8a8a" stroke="#1a1a1a" stroke-width="1.800"/><path d="M4 15h7v6H4zM21 15h7v6h-7z" fill="#e0e0e0"/></g></svg></div>
<div class="tic" style="left:112px;top:121px"><svg width="32" height="32" viewBox="0 0 32 32" preserveAspectRatio="none"><use href="#sBinoG" x="0" y="0" width="32" height="32"/><path d="M16 21h8.500v-5l8.500 7.500-8.500 7.500v-5H16z" fill="#b4b4b4" stroke="#8c8c8c" stroke-width=".9"/></svg></div>
<div class="tic" style="left:161px;top:121px"><svg width="32" height="32" viewBox="0 0 32 32" preserveAspectRatio="none"><use href="#sBinoG" x="1.500" y="0" width="32" height="32"/><path d="M17 21H8.500v-5L0 23.500l8.500 7.500v-5H17z" fill="#b4b4b4" stroke="#8c8c8c" stroke-width=".9"/></svg></div>
<div class="tic" style="left:211px;top:121px"><svg width="32" height="32" viewBox="0 0 32 32" preserveAspectRatio="none"><text x="1" y="14" font-family="Liberation Sans" font-size="15" fill="#000">A</text><text x="17" y="30" font-family="Liberation Sans" font-size="15" fill="#000">B</text><path d="M6 17v6h6" fill="none" stroke="#2a2ad0" stroke-width="1.600"/><path d="M11 20l4 3-4 3z" fill="#2a2ad0"/><path d="M21 13V7h5" fill="none" stroke="#2a2ad0" stroke-width="1.600"/><path d="M25 4l4 3-4 3z" fill="#2a2ad0"/></svg></div>
<div class="grip" style="left:271px;top:122px"></div>
<div class="tic" style="left:284px;top:121px"><svg width="32" height="32" viewBox="0 0 32 32" preserveAspectRatio="none"><rect x="1" y="3" width="30" height="21" rx="2.500" fill="url(#gRect)" stroke="#6c8ed8" stroke-width="1.200"/></svg></div>
<div class="tic" style="left:332px;top:121px"><svg width="32" height="32" viewBox="0 0 32 32" preserveAspectRatio="none"><rect x="1" y="3" width="29" height="20" rx="2" fill="#d4d4d4" stroke="#a2a2a2" stroke-width="1"/><path d="M16 20h8v-4l8 6.500-8 6.500v-4h-8z" fill="#b4b4b4" stroke="#909090" stroke-width=".8"/></svg></div>
<div class="tic" style="left:381px;top:121px"><svg width="32" height="32" viewBox="0 0 32 32" preserveAspectRatio="none"><rect x="3" y="3" width="29" height="20" rx="2" fill="#d4d4d4" stroke="#a2a2a2" stroke-width="1"/><path d="M16 20H8v-4l-8 6.500 8 6.500v-4h8z" fill="#b4b4b4" stroke="#909090" stroke-width=".8"/></svg></div>
<div class="tic" style="left:429px;top:121px"><svg width="32" height="32" viewBox="0 0 32 32" preserveAspectRatio="none"><rect x="5" y="8" width="27" height="20" rx="2" fill="#dcdcdc" stroke="#aaa" stroke-width="1"/><rect x="0" y="2" width="28" height="20" rx="2" fill="#d0d0d0" stroke="#a2a2a2" stroke-width="1"/><path d="M9 8l5-1 17 22-3 1zM29 8l-4-1-14 24 3 1z" fill="#9a9a9a" stroke="#8a8a8a" stroke-width=".5"/></svg></div>
<div class="grip" style="left:475px;top:122px"></div>
<div class="tic" style="left:487px;top:121px"><svg width="32" height="32" viewBox="0 0 32 32" preserveAspectRatio="none"><rect x="1" y="3" width="30" height="26" fill="#fff" stroke="#5a78c8" stroke-width="1"/><rect x="1.500" y="3.500" width="29" height="5" fill="#5b82e6"/><path d="M1 13.500h30M1 18.500h30M1 23.500h30M8.500 8v21M16 8v21M23.500 8v21" stroke="#9ab0e0" stroke-width="1"/><rect x="1" y="26" width="30" height="3" fill="#c5d3f3" opacity=".7"/></svg></div>
<div class="tic" style="left:536px;top:121px"><svg width="32" height="32" viewBox="0 0 32 32" preserveAspectRatio="none"><path d="M5 5v22c0 2.500 5 4 11 4s11-1.500 11-4V5z" fill="url(#gGoldH)" stroke="#b37d0a" stroke-width=".8"/><ellipse cx="16" cy="5" rx="11" ry="4" fill="url(#gGoldH)" stroke="#b37d0a" stroke-width=".8"/><path d="M5 12.500c0 2.500 5 4 11 4s11-1.500 11-4M5 20c0 2.500 5 4 11 4s11-1.500 11-4" fill="none" stroke="#b37d0a" stroke-width="1"/></svg></div>
<div class="tic" style="left:581px;top:121px"><svg width="32" height="32" viewBox="0 0 32 32" preserveAspectRatio="none"><path d="M7 3l2-2h14l2 2v27H7z" fill="url(#gTan)" stroke="#8c7a4e" stroke-width=".8"/><rect x="9" y="5" width="14" height="11" fill="#cdbb8d" stroke="#9a865a" stroke-width=".6"/><rect x="9" y="18" width="14" height="11" fill="#cdbb8d" stroke="#9a865a" stroke-width=".6"/><rect x="12" y="8" width="8" height="4" fill="#f3efe2" stroke="#8c7a4e" stroke-width=".6"/><rect x="12" y="21" width="8" height="4" fill="#f3efe2" stroke="#8c7a4e" stroke-width=".6"/></svg></div>
<div class="tic" style="left:632px;top:121px"><svg width="32" height="32" viewBox="0 0 32 32" preserveAspectRatio="none"><g transform="translate(1 0) scale(.8 1)"><path d="M5 5v22c0 2.500 5 4 11 4s11-1.500 11-4V5z" fill="url(#gTealH)" stroke="#7d9e97" stroke-width=".8"/><ellipse cx="16" cy="5" rx="11" ry="4" fill="url(#gTealH)" stroke="#7d9e97" stroke-width=".8"/><path d="M5 12.500c0 2.500 5 4 11 4s11-1.500 11-4M5 20c0 2.500 5 4 11 4s11-1.500 11-4" fill="none" stroke="#7d9e97" stroke-width="1"/></g><path d="M14 19l6-4 3 5-6 4z" fill="#e36fe0" stroke="#b040b0" stroke-width=".6"/><path d="M23 18l5-5 4 4-5 5z" fill="#4a9cf0" stroke="#2a6cc0" stroke-width=".6"/><path d="M17 26l5-3 4 5-5 4z" fill="#f5c52e" stroke="#b8901a" stroke-width=".6"/></svg></div>
<div class="tsep" style="left:677px;top:120px"></div>
<div class="tic" style="left:688px;top:121px"><svg width="32" height="32" viewBox="0 0 32 32" preserveAspectRatio="none"><path d="M3 4h26q2 0 2 2v14q0 2-2 2h-3l.500 7-7-7H3q-2 0-2-2V6q0-2 2-2z" fill="#f7f9ff" stroke="#6f87b8" stroke-width="1.200"/><path d="M6 9h20M6 12.500h20M6 16h20" stroke="#9bb0dc" stroke-width="1"/></svg></div>
<div class="grip" style="left:735px;top:122px"></div>
<div class="tic" style="left:747px;top:121px"><svg width="32" height="32" viewBox="0 0 32 32" preserveAspectRatio="none"><rect x="1" y="2" width="30" height="27" fill="#f6f6f8" stroke="#9a9aa6" stroke-width="1"/><rect x="1.500" y="2.500" width="29" height="2" fill="#c9c9d4"/><circle cx="6.500" cy="9" r="1.800" fill="#6a6ae0"/><circle cx="6.500" cy="14" r="1.800" fill="#e05a3a"/><circle cx="6.500" cy="19" r="1.800" fill="#e8b020"/><circle cx="6.500" cy="24" r="1.800" fill="#4ab04a"/><path d="M10 9h5M10 14h5M10 19h5M10 24h5M23 9h5M23 14h5M23 19h5M23 24h5" stroke="#5a5a8a" stroke-width="1"/><path d="M18.500 8h2v2h-2zM18.500 13h2v2h-2zM18.500 18h2v2h-2zM18.500 23h2v2h-2z" fill="none" stroke="#8a8a9a" stroke-width=".7"/></svg></div>
<div class="tic" style="left:796px;top:121px"><svg width="32" height="32" viewBox="0 0 32 32" preserveAspectRatio="none"><rect x="1" y="2" width="29" height="25" fill="#f6f6f8" stroke="#9a9aa6" stroke-width="1"/><rect x="1.500" y="2.500" width="28" height="2" fill="#c9c9d4"/><path d="M5 9l2 2.500 4-5M5 15l2 2.500 4-5M5 21l2 2.500 4-5" fill="none" stroke="#1f6fd8" stroke-width="1.700"/><path d="M13 10h11M13 16h11M13 22h6" stroke="#6a5a8a" stroke-width="1"/><use href="#sInfo" x="17" y="17" width="15" height="15"/></svg></div>
<div class="tic" style="left:844px;top:121px"><svg width="32" height="32" viewBox="0 0 32 32" preserveAspectRatio="none"><g fill="none" stroke="#8a1f9a" stroke-width="2"><rect x="7" y="2" width="7" height="7"/><rect x="1" y="17" width="7" height="7"/><rect x="13" y="17" width="7" height="7"/><path d="M10.500 9v4M4.500 17v-4h12v4" stroke-width="1.600"/></g><use href="#sInfo" x="17" y="17" width="15" height="15"/></svg></div>
<div class="tic" style="left:893px;top:121px"><svg width="32" height="32" viewBox="0 0 32 32" preserveAspectRatio="none"><path d="M9 1h17L16 12h8L5 31l6-15H4z" fill="url(#gBolt)" stroke="#c8842a" stroke-width=".8" transform="translate(-1 0) scale(0.95)"/><use href="#sInfo" x="15" y="17" width="15" height="15"/></svg></div>
<div class="tic" style="left:940px;top:121px"><svg width="32" height="32" viewBox="0 0 32 32" preserveAspectRatio="none"><rect x="1" y="3" width="30" height="24" fill="#f4f4f8" stroke="#a0a0b0" stroke-width="1"/><path d="M1 8h30M1 12.500h30M1 17h30M1 21.500h30M7 3v24M13 3v24M19 3v24M25 3v24" stroke="#c4c4d0" stroke-width=".8"/><path d="M3 24c3-10 5-12 7-9s3 4 5-2 3-9 5-8 3 12 5 14 3 2 6 2" fill="none" stroke="#f01818" stroke-width="1.800"/></svg></div>
<div class="tic" style="left:987px;top:121px"><svg width="32" height="32" viewBox="0 0 32 32" preserveAspectRatio="none"><rect x="6" y="1" width="24" height="30" fill="#f8faff" stroke="#7a94c4" stroke-width="1"/><rect x="6.5" y="1.500" width="3" height="29" fill="#dfe7f7"/><path d="M3.5 5h5" stroke="#e8a020" stroke-width="2.200" stroke-linecap="round"/><path d="M3.5 10h5" stroke="#e8a020" stroke-width="2.200" stroke-linecap="round"/><path d="M3.5 15h5" stroke="#e8a020" stroke-width="2.200" stroke-linecap="round"/><path d="M3.5 20h5" stroke="#e8a020" stroke-width="2.200" stroke-linecap="round"/><path d="M3.5 25h5" stroke="#e8a020" stroke-width="2.200" stroke-linecap="round"/><path d="M11 5h16M11 27h16" stroke="#a0aed0" stroke-width="1"/><path d="M19.500 7l8.500 15H11z" fill="#ffd814" stroke="#b08a00" stroke-width=".8"/><path d="M19.500 12v5" stroke="#000" stroke-width="1.800"/><circle cx="19.500" cy="19.800" r="1.100" fill="#000"/></svg></div>
<div class="grip" style="left:1057px;top:122px"></div>
<div class="tic" style="left:1070px;top:121px"><svg width="32" height="32" viewBox="0 0 32 32" preserveAspectRatio="none"><defs><linearGradient id="gCl" x1="0" y1="0" x2="0" y2="1"><stop offset="0" stop-color="#f2f6fb"/><stop offset="1" stop-color="#b9cbe3"/></linearGradient></defs><path d="M8 24a6.500 6.500 0 01-.5-13 9 9 0 0116.500-3.500A7.500 7.500 0 0127 24z" fill="url(#gCl)" stroke="#a4b8d4" stroke-width=".8"/><path d="M0 4.500h7.500V0L15.500 7 7.500 14V9.500H0z" fill="#e03838" stroke="#a81a1a" stroke-width=".7"/><path d="M1 5.500h7.500V2.500" fill="none" stroke="#f49090" stroke-width=".9"/><path d="M16 24v4" stroke="#9aa8c0" stroke-width="2"/><rect x="-.5" y="27" width="34" height="4" fill="#cfd8ea" stroke="#8a9ab8" stroke-width=".7"/><rect x="11" y="25.500" width="10" height="7" rx="1" fill="#f2c544" stroke="#a8821e" stroke-width=".8"/></svg></div>
<div class="tsep" style="left:1115px;top:120px"></div>
<div class="tic" style="left:1125px;top:121px"><svg width="32" height="32" viewBox="0 0 32 32" preserveAspectRatio="none"><rect x="6" y="6" width="19.500" height="20" fill="url(#gSq)" stroke="#6f93e6" stroke-width=".8"/><path d="M25.500 6v20H6" fill="none" stroke="#1a3c9c" stroke-width="1.600"/></svg></div>
<div class="tic" style="left:1175px;top:121px"><svg width="32" height="32" viewBox="0 0 32 32" preserveAspectRatio="none"><defs><linearGradient id="gRf" x1="0" y1="0" x2="1" y2="1"><stop offset="0" stop-color="#2a6ae8"/><stop offset="1" stop-color="#4a98ff"/></linearGradient></defs><path d="M22.750 25.960A11.500 11.500 0 1 1 27.800 12.070" fill="none" stroke="url(#gRf)" stroke-width="3.800"/><path d="M21.500 13.800l13-2L29.500 23z" fill="#3a86f8"/></svg></div>
<div class="tdd" style="left:1221px;top:134px"></div>
<div class="tic" style="left:1246px;top:121px"><svg width="32" height="32" viewBox="0 0 32 32" preserveAspectRatio="none"><path d="M1 25l10-7h14l8 5v4l-12 6L1 29z" fill="#d8d8d8" stroke="#9a9a9a" stroke-width=".7"/><path d="M1 25l20 4.500L33 23" fill="none" stroke="#fff" stroke-width="1"/><path d="M1 25l10-7h14l8 5-12 6.500z" fill="#ececec" opacity=".8"/><circle cx="19" cy="30.500" r="1.100" fill="#2c2"/><path d="M8.700 3C5 5 2.500 10 3.300 14.500C4 19.500 6 22.500 8.500 23.400L14.600 23.500L14.800 31.500L30 18.800L15 6.200L15 14.300L10.200 14C7.500 12.500 6 10 6.200 8.200C6.300 6 7 4.500 8.700 3Z" fill="url(#gGo)" stroke="#2a9418" stroke-width=".9" stroke-linejoin="round" transform="translate(1.500 -4.500) scale(.95)"/></svg></div>
<div class="grip" style="left:1300px;top:122px"></div>
<div class="tic" style="left:1312px;top:121px"><svg width="32" height="32" viewBox="0 0 32 32" preserveAspectRatio="none"><circle cx="16" cy="16" r="14.500" fill="url(#gClock)" stroke="#5a5ab8" stroke-width="1.800"/><path d="M16 6v11h8" fill="none" stroke="#4a4ab0" stroke-width="1.800"/><path d="M16 2v3M16 27v3M2 16h3M27 16h3" stroke="#5a5ab8" stroke-width="1.200"/></svg></div>
<div class="tic" style="left:1361px;top:121px"><svg width="32" height="32" viewBox="0 0 32 32" preserveAspectRatio="none"><path d="M8 15V10a8 8 0 0116 0v5" fill="none" stroke="#c8961a" stroke-width="4.500"/><path d="M8 15V10a8 8 0 0116 0v5" fill="none" stroke="#f6d866" stroke-width="1.600"/><rect x="3" y="14" width="26" height="17" rx="1.500" fill="url(#gGold)" stroke="#9a7010" stroke-width="1"/><circle cx="16" cy="20.500" r="2.200" fill="#1a1a1a"/><path d="M15 21h2l1 6h-4z" fill="#1a1a1a"/></svg></div>
<div class="tic" style="left:1410px;top:121px"><svg width="32" height="32" viewBox="0 0 32 32" preserveAspectRatio="none"><rect x="5" y="1" width="22" height="30" fill="#f8faff" stroke="#7a94c4" stroke-width="1"/><rect x="5.5" y="1.500" width="3" height="29" fill="#dfe7f7"/><path d="M2.5 5h5" stroke="#e8a020" stroke-width="2.200" stroke-linecap="round"/><path d="M2.5 10h5" stroke="#e8a020" stroke-width="2.200" stroke-linecap="round"/><path d="M2.5 15h5" stroke="#e8a020" stroke-width="2.200" stroke-linecap="round"/><path d="M2.5 20h5" stroke="#e8a020" stroke-width="2.200" stroke-linecap="round"/><path d="M2.5 25h5" stroke="#e8a020" stroke-width="2.200" stroke-linecap="round"/><path d="M10 6h14M10 10h14M10 14h14M10 18h9M10 22h6" stroke="#5878b8" stroke-width="1.200"/><use href="#sGear" x="16" y="16" width="16" height="16"/></svg></div>
<div class="tic" style="left:1459px;top:121px"><svg width="32" height="32" viewBox="0 0 32 32" preserveAspectRatio="none"><path d="M9 1h17L16 12h8L5 31l6-15H4z" fill="url(#gBolt)" stroke="#c8842a" stroke-width=".8" transform="translate(0 0) scale(0.95)"/><use href="#sGear" x="14" y="16" width="16" height="16"/></svg></div>
<div class="tic" style="left:1507px;top:121px"><svg width="32" height="32" viewBox="0 0 32 32" preserveAspectRatio="none"><path d="M13 5L7 30M13 5l6 25M13 5v25M9.500 20l8 4M16.500 20l-8 4M11 13l5 3M15 13l-5 3" fill="none" stroke="#4a4a4a" stroke-width="1.600"/><g fill="none" stroke="#36a436" stroke-width="1.300"><path d="M9 3a5 5 0 000 7M6 1.500a8 8 0 000 10M3 .5a11 11 0 000 12M17 3a5 5 0 010 7M20 1.500a8 8 0 010 10M23 .5a11 11 0 010 12"/></g><use href="#sGear" x="16" y="16" width="16" height="16"/></svg></div>

<!-- project view -->
<div class="phead" style="left:0;top:164px;width:373px"><div class="ph" style="left:4.2px;top:5px;letter-spacing:-0.134px;font-size:12px;">Project View</div><svg style="left:321px;top:7px" width="50" height="12" viewBox="0 0 50 12"><path d="M0 3h11l-5.500 5.500z" fill="#000"/><path d="M22 1h5v5h1.500v1.300H25.400V11h-1V7.300H20.500V6H22zM25 1.500v4.500" fill="#000" stroke="#000" stroke-width=".4"/><rect x="23" y="2" width="1.500" height="4" fill="#c8d7e8"/><path d="M38.500 1.500l8 8M46.500 1.500l-8 8" stroke="#000" stroke-width="1.700"/></svg></div>
<div style="left:0;top:189px;width:373px;height:446px;background:#fff;border:1px solid #a0a0a0"></div>
<div style="left:4px;top:193px;width:366px;height:439px;background:#fff;border:1px solid #a0a0a0"></div>
<div class="vdot" style="left:16px;top:209px;height:196px"></div>
<div class="vdot" style="left:35px;top:213px;height:12px"></div>
<div class="vdot" style="left:35px;top:253px;height:12px"></div>
<div class="vdot" style="left:35px;top:293px;height:12px"></div>
<div class="vdot" style="left:35px;top:333px;height:8px"></div>
<div class="vdot" style="left:54px;top:353px;height:12px"></div>
<div class="hdot" style="left:21px;top:204px;width:6px"></div>
<div class="hdot" style="left:35px;top:224px;width:11px"></div>
<div class="hdot" style="left:21px;top:244px;width:6px"></div>
<div class="hdot" style="left:35px;top:264px;width:11px"></div>
<div class="hdot" style="left:21px;top:284px;width:6px"></div>
<div class="hdot" style="left:35px;top:304px;width:11px"></div>
<div class="hdot" style="left:21px;top:324px;width:6px"></div>
<div class="hdot" style="left:40px;top:344px;width:6px"></div>
<div class="hdot" style="left:54px;top:364px;width:11px"></div>
<div class="hdot" style="left:21px;top:384px;width:6px"></div>
<div class="hdot" style="left:16px;top:404px;width:11px"></div>
<div class="ti" style="left:27px;top:196px"><svg width="15" height="16" viewBox="0 0 17 18" preserveAspectRatio="none"><path d="M.5 .5h16v10l-1.500 1.500h-3.500v3.500l-1 1-1.200-1h-1.800l-1.200 1-1.200-1H3.300l-1.300 1.200-1.500-1.200z" fill="#d2eeff" stroke="none"/><path d="M.5 .5v14.500l1.500 1.200 1.300-1.200" fill="none" stroke="#8a8a8a" stroke-width="1"/><path d="M.5 .5h16" stroke="#8a8a8a" stroke-width="1"/><path d="M16.500 .5v10l-1.500 1.500h-3.500v3.500l-1 1-1.200-1h-1.800l-1.200 1-1.200-1H3.300" fill="none" stroke="#4a4a4a" stroke-width="1.100"/><path d="M1 1h5v14H1z" fill="#fff" opacity=".55"/><path d="M3 9.500h11M3 12.200h7.500" stroke="#8c8c8c" stroke-width="1"/><g fill="#ff0000"><path d="M1.800 2h1.600v4.200l.6 1 .6-1V2h1.600v4.500L4.800 8h-1.600L1.800 6.500z"/><path d="M6.800 2h3.200l.9.900v2l-.9.900H8.500V8H6.800zM8.500 3.300v1.300h.9V3.300z"/><path d="M11.500 2h1.700v4.600h2V8h-3.700z"/></g></svg></div>
<div class="tl" style="left:47.6px;top:195px;letter-spacing:0.629px;">Program</div>
<div class="exp" style="left:12px;top:200px"><svg width="9" height="9" viewBox="0 0 9 9" preserveAspectRatio="none"><defs><linearGradient id="gEx" x1="0" y1="0" x2="0" y2="1"><stop offset="0" stop-color="#fff"/><stop offset=".5" stop-color="#f6f6f6"/><stop offset="1" stop-color="#dcdcdc"/></linearGradient></defs><rect x=".5" y=".5" width="8" height="8" rx="1.200" fill="url(#gEx)" stroke="#919191" stroke-width="1"/><path d="M2 4.500h5" stroke="#3a56a8" stroke-width="1"/></svg></div>
<div class="ti" style="left:46px;top:216px"><svg width="16" height="16" viewBox="0 0 16 16" preserveAspectRatio="none"><defs><linearGradient id="gTP" x1="0" y1="0" x2="1" y2="1"><stop offset="0" stop-color="#ffffff"/><stop offset=".5" stop-color="#eef2fb"/><stop offset="1" stop-color="#b4c4ea"/></linearGradient></defs><path d="M2.600 .6h7.600l3.600 3.600v10.300H2.600z" fill="url(#gTP)" stroke="#93a3c4" stroke-width=".9"/><path d="M13.800 4.200v10.300H2.600" fill="none" stroke="#4f6390" stroke-width="1.200"/><path d="M10.200 .6v3.600h3.600" fill="#dfe7f8" stroke="#6a7ea8" stroke-width=".8"/></svg></div>
<div class="tl" style="left:66.9px;top:215px;letter-spacing:0.308px;">main.vpl</div>
<div class="ti" style="left:27px;top:236px"><svg width="15" height="16" viewBox="0 0 17 18" preserveAspectRatio="none"><path d="M.5 .5h16v10l-1.500 1.500h-3.500v3.500l-1 1-1.200-1h-1.800l-1.200 1-1.200-1H3.300l-1.300 1.200-1.500-1.200z" fill="#d2eeff" stroke="none"/><path d="M.5 .5v14.500l1.500 1.200 1.300-1.200" fill="none" stroke="#8a8a8a" stroke-width="1"/><path d="M.5 .5h16" stroke="#8a8a8a" stroke-width="1"/><path d="M16.500 .5v10l-1.500 1.500h-3.500v3.500l-1 1-1.200-1h-1.800l-1.200 1-1.200-1H3.300" fill="none" stroke="#4a4a4a" stroke-width="1.100"/><path d="M1 1h5v14H1z" fill="#fff" opacity=".55"/><path d="M3 9.500h11M3 12.200h7.500" stroke="#8c8c8c" stroke-width="1"/><g fill="#10b010"><path d="M1.800 2h1.700v6H1.800z"/><path d="M4.500 2h1.500l1.500 3V2h1.500v6H7.500L6 5v3H4.500z"/><path d="M10.800 2h3.200l.9.900v.9h-1.500v-.5h-1.300v3.400h1.300v-.5h1.500v.9l-.9.900h-3.200l-.9-.9V2.900z"/></g></svg></div>
<div class="tl" style="left:48.0px;top:235px;letter-spacing:0.149px;">Include</div>
<div class="exp" style="left:12px;top:240px"><svg width="9" height="9" viewBox="0 0 9 9" preserveAspectRatio="none"><defs><linearGradient id="gEx" x1="0" y1="0" x2="0" y2="1"><stop offset="0" stop-color="#fff"/><stop offset=".5" stop-color="#f6f6f6"/><stop offset="1" stop-color="#dcdcdc"/></linearGradient></defs><rect x=".5" y=".5" width="8" height="8" rx="1.200" fill="url(#gEx)" stroke="#919191" stroke-width="1"/><path d="M2 4.500h5" stroke="#3a56a8" stroke-width="1"/></svg></div>
<div class="ti" style="left:46px;top:256px"><svg width="16" height="16" viewBox="0 0 16 16" preserveAspectRatio="none"><defs><linearGradient id="gTP" x1="0" y1="0" x2="1" y2="1"><stop offset="0" stop-color="#ffffff"/><stop offset=".5" stop-color="#eef2fb"/><stop offset="1" stop-color="#b4c4ea"/></linearGradient></defs><path d="M2.600 .6h7.600l3.600 3.600v10.300H2.600z" fill="url(#gTP)" stroke="#93a3c4" stroke-width=".9"/><path d="M13.800 4.200v10.300H2.600" fill="none" stroke="#4f6390" stroke-width="1.200"/><path d="M10.200 .6v3.600h3.600" fill="#dfe7f8" stroke="#6a7ea8" stroke-width=".8"/></svg></div>
<div class="tl" style="left:66.9px;top:255px;letter-spacing:0.036px;">el_prices.inc</div>
<div class="ti" style="left:27px;top:276px"><svg width="16" height="16" viewBox="0 0 16 16" preserveAspectRatio="none"><path d="M2.500 .5h8.500l3 3v11h-11.500z" fill="#00ff00" stroke="none"/><path d="M2.500 14.500V.5h8.500" fill="none" stroke="#8a7a8a" stroke-width="1"/><path d="M11 .5v3h3M14 3.500v10.500H2.500" fill="none" stroke="#000" stroke-width="1.400"/><path d="M11.500 1l2.500 2.500h-2.500z" fill="#b8ffb8"/></svg></div>
<div class="tl" style="left:47.6px;top:275px;letter-spacing:0.674px;">Job</div>
<div class="exp" style="left:12px;top:280px"><svg width="9" height="9" viewBox="0 0 9 9" preserveAspectRatio="none"><defs><linearGradient id="gEx" x1="0" y1="0" x2="0" y2="1"><stop offset="0" stop-color="#fff"/><stop offset=".5" stop-color="#f6f6f6"/><stop offset="1" stop-color="#dcdcdc"/></linearGradient></defs><rect x=".5" y=".5" width="8" height="8" rx="1.200" fill="url(#gEx)" stroke="#919191" stroke-width="1"/><path d="M2 4.500h5" stroke="#3a56a8" stroke-width="1"/></svg></div>
<div class="ti" style="left:46px;top:296px"><svg width="16" height="16" viewBox="0 0 16 16" preserveAspectRatio="none"><path d="M3.500 .5h8l3 3v10.500H3.500z" fill="#00f000" stroke="none"/><path d="M3.500 14V.5h8" fill="none" stroke="#8a7a8a" stroke-width="1"/><path d="M11.500 .5v3h3M14.500 3.500v10H4" fill="none" stroke="#000" stroke-width="1.400"/><circle cx="4.500" cy="7.300" r="3" fill="#40e8e8" stroke="#111" stroke-width="1.200"/><circle cx="4.500" cy="7.300" r="1.600" fill="#a0f4f4"/><path d="M7 9.500l5.500 5.200" stroke="#111" stroke-width="2.800"/><path d="M7.200 9.700l5 4.800" stroke="#1a2af0" stroke-width="1.600"/><path d="M7.800 10.800l3.600 3.500" stroke="#40d8ff" stroke-width=".6"/></svg></div>
<div class="tl" style="left:66.9px;top:295px;letter-spacing:0.061px;">Job_main (main.vpx)</div>
<div class="ti" style="left:27px;top:316px"><svg width="16" height="16" viewBox="0 0 16 16" preserveAspectRatio="none"><defs><linearGradient id="gIO" x1="0" y1="0" x2="1" y2="1"><stop offset="0" stop-color="#ffffff"/><stop offset=".45" stop-color="#e8eefb"/><stop offset="1" stop-color="#5f86cc"/></linearGradient></defs><rect x="1" y=".5" width="14" height="14.500" fill="url(#gIO)" stroke="#9aa6c0" stroke-width=".8"/><path d="M15 .5v14.500H1" fill="none" stroke="#2e4470" stroke-width="1.300"/><circle cx="4.500" cy="3.800" r="1.400" fill="#3a48e0"/><circle cx="4.500" cy="7.800" r="1.400" fill="#e0402a"/><circle cx="4.500" cy="11.800" r="1.400" fill="#e8a010"/><circle cx="4.300" cy="3.600" r=".5" fill="#c0c8ff"/><circle cx="4.300" cy="7.600" r=".5" fill="#ffc0b0"/><circle cx="4.300" cy="11.600" r=".5" fill="#fff0a0"/><path d="M7.500 3.800h5M7.500 7.800h5M7.500 11.800h5" stroke="#8290a8" stroke-width="1"/></svg></div>
<div class="tl" style="left:48.0px;top:315px;letter-spacing:0.181px;">I/O Extension</div>
<div class="exp" style="left:12px;top:320px"><svg width="9" height="9" viewBox="0 0 9 9" preserveAspectRatio="none"><defs><linearGradient id="gEx" x1="0" y1="0" x2="0" y2="1"><stop offset="0" stop-color="#fff"/><stop offset=".5" stop-color="#f6f6f6"/><stop offset="1" stop-color="#dcdcdc"/></linearGradient></defs><rect x=".5" y=".5" width="8" height="8" rx="1.200" fill="url(#gEx)" stroke="#919191" stroke-width="1"/><path d="M2 4.500h5" stroke="#3a56a8" stroke-width="1"/></svg></div>
<div class="ti" style="left:46px;top:336px"><svg width="16" height="16" viewBox="0 0 16 16" preserveAspectRatio="none"><path d="M.5 11.200h3.500M4 15.500v-4.300h3.200v-2h1.600v-4h7" fill="none" stroke="#000" stroke-width="1.300"/><path d="M13 0v5" stroke="#000" stroke-width="1.300"/><rect x="12" y="4.300" width="2" height="1.600" fill="#f0e000"/><rect x="2.600" y="10.600" width="1.400" height="1.200" fill="#f0e000"/></svg></div>
<div class="tl" style="left:67.1px;top:335px;letter-spacing:-0.056px;">NET-1</div>
<div class="exp" style="left:31px;top:340px"><svg width="9" height="9" viewBox="0 0 9 9" preserveAspectRatio="none"><defs><linearGradient id="gEx" x1="0" y1="0" x2="0" y2="1"><stop offset="0" stop-color="#fff"/><stop offset=".5" stop-color="#f6f6f6"/><stop offset="1" stop-color="#dcdcdc"/></linearGradient></defs><rect x=".5" y=".5" width="8" height="8" rx="1.200" fill="url(#gEx)" stroke="#919191" stroke-width="1"/><path d="M2 4.500h5" stroke="#3a56a8" stroke-width="1"/></svg></div>
<div class="ti" style="left:65px;top:356px"><svg width="16" height="16" viewBox="0 0 16 16" preserveAspectRatio="none"><defs><linearGradient id="gDV" x1="0" y1="0" x2="0" y2="1"><stop offset="0" stop-color="#f4f4f4"/><stop offset="1" stop-color="#a8a8a8"/></linearGradient></defs><path d="M2 1h12.500l1.500 1.500v4.500l-1.500 1.500H2L.5 7V2.500z" fill="url(#gDV)" stroke="#111" stroke-width="1"/><path d="M2 4.800h10" stroke="#888" stroke-width=".8"/><rect x="11.500" y="3" width="2" height="1.300" fill="#10d010"/><path d="M8 8.500v4M0 12.700h16" stroke="#000" stroke-width="1.300"/><rect x="6.300" y="11.700" width="3" height="2" rx=".8" fill="#f0e000" stroke="#6a5a00" stroke-width=".4"/></svg></div>
<div class="tl" style="left:86.3px;top:355px;letter-spacing:0.262px;">[1] EX9065D (AI=0 AO=0 DI=4 DO=5)</div>
<div class="ti" style="left:27px;top:376px"><svg width="16" height="16" viewBox="0 0 16 16" preserveAspectRatio="none"><defs><linearGradient id="gUF" x1="0" y1="0" x2="1" y2="0"><stop offset="0" stop-color="#e2cfa8"/><stop offset=".5" stop-color="#d2b888"/><stop offset="1" stop-color="#b08c58"/></linearGradient></defs><path d="M3.500 1h8l1.500 1.500V13l-1.500 1.700h-8L2 13V2.500z" fill="url(#gUF)" stroke="#9a7646" stroke-width=".9"/><path d="M2.500 7.800h10" stroke="#9a7646" stroke-width=".8"/><path d="M5.300 5.300V4h5M5.300 10.800V9.500h5" fill="none" stroke="#6a4e28" stroke-width="1"/><path d="M5.800 5.500h4.500M5.800 11h4.500" stroke="#f6ecd6" stroke-width=".8"/></svg></div>
<div class="tl" style="left:48.0px;top:375px;letter-spacing:0.201px;">User files</div>
<div class="exp" style="left:12px;top:380px"><svg width="9" height="9" viewBox="0 0 9 9" preserveAspectRatio="none"><rect x=".5" y=".5" width="8" height="8" rx="1.200" fill="url(#gEx)" stroke="#919191" stroke-width="1"/><path d="M2 4.500h5M4.500 2v5" stroke="#3a56a8" stroke-width="1"/></svg></div>
<div class="ti" style="left:27px;top:396px"><svg width="16" height="16" viewBox="0 0 16 16" preserveAspectRatio="none"><path d="M5 2.300a2 2 0 114 0c0 1-.6 1.400-.6 2.400h3.400v3.200c.9 0 1.300-.7 2.200-.7a1.900 1.900 0 010 3.800c-.9 0-1.300-.7-2.200-.7V15H8.300v-2.300H5.700V15H1.800V4.700h3.800c0-1-.6-1.400-.6-2.400z" fill="#1fb678"/></svg></div>
<div class="tl" style="left:48.0px;top:395px;letter-spacing:0.194px;">Platform Extension</div>
<!-- project tabs -->
<div style="left:2px;top:636px;width:85px;height:23px;background:#fff;border:1px solid #d9d9d9;border-top:none"></div>
<div style="left:86px;top:636px;width:76px;height:22px;background:#f0f0f0;border:1px solid #dcdcdc;border-top:none"></div>
<div class="tl" style="left:7.7px;top:638px;letter-spacing:-0.052px;font-size:12px;">Project View</div>
<div class="tl" style="left:91.8px;top:637px;letter-spacing:-0.159px;font-size:12px;color:#6d6d6d">Drive View</div>

<!-- elements -->
<div class="phead" style="left:0;top:665px;width:373px;height:24px"><div class="ph" style="left:4.1px;top:5px;letter-spacing:-0.260px;font-size:12px;">Elements</div><svg style="left:321px;top:7px" width="50" height="12" viewBox="0 0 50 12"><path d="M0 3h11l-5.500 5.500z" fill="#000"/><path d="M22 1h5v5h1.500v1.300H25.400V11h-1V7.300H20.500V6H22zM25 1.500v4.500" fill="#000" stroke="#000" stroke-width=".4"/><rect x="23" y="2" width="1.500" height="4" fill="#c8d7e8"/><path d="M38.500 1.500l8 8M46.500 1.500l-8 8" stroke="#000" stroke-width="1.700"/></svg></div>
<div style="left:0;top:689px;width:373px;height:27px;background:linear-gradient(180deg,#f3f5fc 0%,#e0e2ee 45%,#b9bbd0 100%)"></div>
<svg style="left:6px;top:694px" width="18" height="18" viewBox="0 0 18 18"><text x="0" y="9" font-family="Liberation Serif" font-weight="bold" font-size="10" fill="#2a4ad0">A</text><text x="0" y="17" font-family="Liberation Serif" font-weight="bold" font-size="10" fill="#a03030">Z</text><path d="M14 2v12" stroke="#000" stroke-width="1.400"/><path d="M11 12h6l-3 5z" fill="#000"/></svg>
<svg style="left:32px;top:694px" width="18" height="18" viewBox="0 0 18 18"><path d="M7 4L6 14.500M11.500 4l-1 10.500M3.500 7.500h10M3 11h10" stroke="#111" stroke-width="1.800" fill="none"/></svg>
<svg style="left:54px;top:694px" width="18" height="18" viewBox="0 0 18 18"><path d="M0 8h5M1 11h4" stroke="#c8b060" stroke-width="1.200"/><path d="M7 8l5-4 5 3-5 4z" fill="#f08af0" stroke="#c050c0" stroke-width=".5"/><path d="M7 8v5l5 3v-5z" fill="#d860d8"/><path d="M12 11v5l5-4V7z" fill="#b848b8"/></svg>
<svg style="left:78px;top:694px" width="18" height="18" viewBox="0 0 18 18"><path d="M0 8h5M1 11h4" stroke="#c8b060" stroke-width="1.200"/><path d="M7 8l5-4 5 3-5 4z" fill="#f08af0" stroke="#c050c0" stroke-width=".5"/><path d="M7 8v5l5 3v-5z" fill="#d860d8"/><path d="M12 11v5l5-4V7z" fill="#b848b8"/></svg>
<svg style="left:101px;top:694px" width="18" height="18" viewBox="0 0 18 18"><path d="M4.500 1.500h8l3 3v12.500H4.500z" fill="#00d800" stroke="#1a1a1a" stroke-width="1"/><circle cx="6" cy="8" r="3.500" fill="#bfe8f8" stroke="#1f8f6f" stroke-width="1.300"/><path d="M8.500 10.500l6 6" stroke="#1a3ad0" stroke-width="2.200"/></svg>
<svg style="left:124px;top:694px" width="18" height="18" viewBox="0 0 18 18"><path d="M1 7l5-5 4.500 4.500-5 5z" fill="#f5c52e" stroke="#b8901a" stroke-width=".6"/><path d="M9 8l4-3.500 4.500 4-4 4z" fill="#e36fe0" stroke="#b040b0" stroke-width=".6"/><path d="M5 12l4-3 4 4-4.500 3.500z" fill="#4a9cf0" stroke="#2a6cc0" stroke-width=".6"/></svg>
<svg style="left:149px;top:694px" width="18" height="18" viewBox="0 0 18 18"><path d="M0 13h5M1 16h4" stroke="#c8b060" stroke-width="1.200"/><path d="M5 11l4-3 4 2-4 3z" fill="#f08af0"/><path d="M5 11v4l4 3v-5zM9 13v5l4-4v-4z" fill="#c050c0"/><path d="M10 5l3-3 3 2-3 3z" fill="#f08af0"/><path d="M10 5v5l3 2V7zM13 7v5l3-3V4z" fill="#c050c0"/></svg>
<svg style="left:174px;top:694px" width="18" height="18" viewBox="0 0 18 18"><rect x="2" y="4" width="10" height="10" fill="url(#gSq)" stroke="#3a5ac0" stroke-width=".8"/></svg>
<svg style="left:197px;top:694px" width="18" height="18" viewBox="0 0 18 18"><rect x=".5" y="1.500" width="6" height="6" fill="#fff" stroke="#555"/><rect x=".5" y="10.500" width="6" height="6" fill="#fff" stroke="#555"/><rect x="2.500" y="3.500" width="2" height="2" fill="#000"/><rect x="2.500" y="12.500" width="2" height="2" fill="#000"/><path d="M9 2h8M9 5h8M9 8h8M9 11h8M9 14h8M9 17h8" stroke="#888" stroke-width="1.200" stroke-dasharray="2 1"/></svg>
<div style="left:0;top:716px;width:355px;height:442px;background:#fff"></div>
<div class="vdot" style="left:11px;top:726px;height:432px"></div>
<div class="ti" style="left:22px;top:718px"><svg width="16" height="16" viewBox="0 0 16 16" preserveAspectRatio="none"><path d="M8.300 2L7.200 12.600M12.300 2l-1.100 10.600M5.500 5.500h8.700M5 9.300h8.700" stroke="#000" stroke-width="1.900" fill="none"/></svg></div>
<div class="tl" style="left:43.0px;top:717px;letter-spacing:-0.182px;font-size:12px;">PGM_VERSION</div>
<div class="hdot" style="left:12px;top:726px;width:10px"></div>
<div class="ti" style="left:22px;top:738px"><svg width="16" height="16" viewBox="0 0 16 16" preserveAspectRatio="none"><path d="M8.300 2L7.200 12.600M12.300 2l-1.100 10.600M5.500 5.500h8.700M5 9.300h8.700" stroke="#000" stroke-width="1.900" fill="none"/></svg></div>
<div class="tl" style="left:43.0px;top:737px;letter-spacing:-0.205px;font-size:12px;">MASTER_PHONE</div>
<div class="hdot" style="left:12px;top:746px;width:10px"></div>
<div class="ti" style="left:22px;top:758px"><svg width="16" height="16" viewBox="0 0 16 16" preserveAspectRatio="none"><path d="M0 5.300L5.300 .3l4.700 4.500-5.300 5z" fill="#f3c030" stroke="#b08818" stroke-width=".6"/><path d="M1.500 5.200l3.800-3.600 2 2z" fill="#fbe38a" opacity=".8"/><path d="M8 7.200l3.800-3.600 4.200 4-3.800 3.800z" fill="#e66ee6" stroke="#b048b0" stroke-width=".5"/><path d="M9.300 7.200l2.500-2.400 1.500 1.500z" fill="#f6b0f6" opacity=".8"/><path d="M3 11.500l4.300-3.500 3.700 3.500-4 4.200z" fill="#4a94ee" stroke="#2a68c0" stroke-width=".5"/><path d="M4.300 11.500l3-2.400 1.300 1.200z" fill="#a0ccff" opacity=".8"/></svg></div>
<div class="tl" style="left:43.0px;top:757px;letter-spacing:0.403px;">energymeter</div>
<div class="hdot" style="left:12px;top:766px;width:7px"></div>
<div class="ti" style="left:22px;top:778px"><svg width="16" height="16" viewBox="0 0 16 16" preserveAspectRatio="none"><defs><linearGradient id="gTri" x1="0" y1="0" x2="1" y2="1"><stop offset="0" stop-color="#7aa8ff"/><stop offset="1" stop-color="#1238c8"/></linearGradient></defs><path d="M4 2.200l6.200 5.500-6.200 5.500z" fill="url(#gTri)" stroke="#1a40c0" stroke-width=".4"/></svg></div>
<div class="tl" style="left:43.0px;top:777px;letter-spacing:-0.106px;">house_ac_5vdc : INT</div>
<div class="hdot" style="left:12px;top:786px;width:10px"></div>
<div class="ti" style="left:22px;top:798px"><svg width="16" height="16" viewBox="0 0 16 16" preserveAspectRatio="none"><defs><linearGradient id="gTri" x1="0" y1="0" x2="1" y2="1"><stop offset="0" stop-color="#7aa8ff"/><stop offset="1" stop-color="#1238c8"/></linearGradient></defs><path d="M4 2.200l6.200 5.500-6.200 5.500z" fill="url(#gTri)" stroke="#1a40c0" stroke-width=".4"/></svg></div>
<div class="tl" style="left:43.0px;top:797px;letter-spacing:0.053px;">heatpump_ok : BOOL</div>
<div class="hdot" style="left:12px;top:806px;width:10px"></div>
<div class="ti" style="left:22px;top:818px"><svg width="16" height="16" viewBox="0 0 16 16" preserveAspectRatio="none"><defs><linearGradient id="gTri" x1="0" y1="0" x2="1" y2="1"><stop offset="0" stop-color="#7aa8ff"/><stop offset="1" stop-color="#1238c8"/></linearGradient></defs><path d="M4 2.200l6.200 5.500-6.200 5.500z" fill="url(#gTri)" stroke="#1a40c0" stroke-width=".4"/></svg></div>
<div class="tl" style="left:43.0px;top:817px;letter-spacing:0.068px;">heatpump_led : BOOL</div>
<div class="hdot" style="left:12px;top:826px;width:10px"></div>
<div class="ti" style="left:22px;top:838px"><svg width="16" height="16" viewBox="0 0 16 16" preserveAspectRatio="none"><path d="M11.300 2L5.200 7.500l6.100 5.500z" fill="url(#gTri)" stroke="#1a40c0" stroke-width=".4"/></svg></div>
<div class="tl" style="left:43.0px;top:837px;letter-spacing:0.021px;">gsm_connected : BOOL</div>
<div class="hdot" style="left:12px;top:846px;width:10px"></div>
<div class="ti" style="left:22px;top:858px"><svg width="16" height="16" viewBox="0 0 16 16" preserveAspectRatio="none"><path d="M11.300 2L5.200 7.500l6.100 5.500z" fill="url(#gTri)" stroke="#1a40c0" stroke-width=".4"/></svg></div>
<div class="tl" style="left:43.0px;top:857px;letter-spacing:-0.009px;">gw_connected : BOOL</div>
<div class="hdot" style="left:12px;top:866px;width:10px"></div>
<div class="ti" style="left:22px;top:878px"><svg width="16" height="16" viewBox="0 0 16 16" preserveAspectRatio="none"><path d="M11.300 2L5.200 7.500l6.100 5.500z" fill="url(#gTri)" stroke="#1a40c0" stroke-width=".4"/></svg></div>
<div class="tl" style="left:43.0px;top:877px;letter-spacing:-0.024px;">klaxon : BOOL</div>
<div class="hdot" style="left:12px;top:886px;width:10px"></div>
<div class="ti" style="left:22px;top:898px"><svg width="16" height="16" viewBox="0 0 16 16" preserveAspectRatio="none"><path d="M11.300 2L5.200 7.500l6.100 5.500z" fill="url(#gTri)" stroke="#1a40c0" stroke-width=".4"/></svg></div>
<div class="tl" style="left:43.0px;top:897px;letter-spacing:0.033px;">circ_pump : BOOL</div>
<div class="hdot" style="left:12px;top:906px;width:10px"></div>
<div class="ti" style="left:22px;top:918px"><svg width="16" height="16" viewBox="0 0 16 16" preserveAspectRatio="none"><path d="M11.300 2L5.200 7.500l6.100 5.500z" fill="url(#gTri)" stroke="#1a40c0" stroke-width=".4"/></svg></div>
<div class="tl" style="left:43.0px;top:917px;letter-spacing:0.075px;">heatpump_enable : BOOL</div>
<div class="hdot" style="left:12px;top:926px;width:10px"></div>
<div class="ti" style="left:22px;top:938px"><svg width="16" height="16" viewBox="0 0 16 16" preserveAspectRatio="none"><path d="M11.300 2L5.200 7.500l6.100 5.500z" fill="url(#gTri)" stroke="#1a40c0" stroke-width=".4"/></svg></div>
<div class="tl" style="left:43.0px;top:937px;letter-spacing:-0.039px;">heatdump_on : ARRAY OF BOOL</div>
<div class="hdot" style="left:12px;top:946px;width:10px"></div>
<div class="ti" style="left:22px;top:958px"><svg width="16" height="16" viewBox="0 0 16 16" preserveAspectRatio="none"><path d="M11.300 2L5.200 7.500l6.100 5.500z" fill="url(#gTri)" stroke="#1a40c0" stroke-width=".4"/></svg></div>
<div class="tl" style="left:43.0px;top:957px;letter-spacing:-0.071px;">el_heater : BOOL</div>
<div class="hdot" style="left:12px;top:966px;width:10px"></div>
<div class="ti" style="left:22px;top:978px"><svg width="16" height="16" viewBox="0 0 16 16" preserveAspectRatio="none"><rect x="3.300" y="3.300" width="8.600" height="8.600" fill="url(#gSq)" stroke="#7f9fe8" stroke-width=".6"/><path d="M12 3.300v8.700H3.300" fill="none" stroke="#1c3a98" stroke-width="1.100"/></svg></div>
<div class="tl" style="left:43.0px;top:977px;letter-spacing:0.101px;font-size:12px;">lan_active : BOOL</div>
<div class="hdot" style="left:12px;top:986px;width:10px"></div>
<div class="ti" style="left:22px;top:998px"><svg width="16" height="16" viewBox="0 0 16 16" preserveAspectRatio="none"><rect x="3.300" y="3.300" width="8.600" height="8.600" fill="url(#gSq)" stroke="#7f9fe8" stroke-width=".6"/><path d="M12 3.300v8.700H3.300" fill="none" stroke="#1c3a98" stroke-width="1.100"/></svg></div>
<div class="tl" style="left:43.0px;top:997px;letter-spacing:0.094px;font-size:12px;">ch_sms : CHANNEL</div>
<div class="hdot" style="left:12px;top:1006px;width:10px"></div>
<div class="ti" style="left:22px;top:1018px"><svg width="16" height="16" viewBox="0 0 16 16" preserveAspectRatio="none"><rect x="3.300" y="3.300" width="8.600" height="8.600" fill="url(#gSq)" stroke="#7f9fe8" stroke-width=".6"/><path d="M12 3.300v8.700H3.300" fill="none" stroke="#1c3a98" stroke-width="1.100"/></svg></div>
<div class="tl" style="left:43.0px;top:1017px;letter-spacing:-0.046px;">klaxon_key : INT</div>
<div class="hdot" style="left:12px;top:1026px;width:10px"></div>
<div class="ti" style="left:22px;top:1038px"><svg width="16" height="16" viewBox="0 0 16 16" preserveAspectRatio="none"><rect x="3.300" y="3.300" width="8.600" height="8.600" fill="url(#gSq)" stroke="#7f9fe8" stroke-width=".6"/><path d="M12 3.300v8.700H3.300" fill="none" stroke="#1c3a98" stroke-width="1.100"/></svg></div>
<div class="tl" style="left:43.0px;top:1037px;letter-spacing:0.108px;font-size:12px;">house_ac : BOOL</div>
<div class="hdot" style="left:12px;top:1046px;width:10px"></div>
<div class="ti" style="left:22px;top:1058px"><svg width="16" height="16" viewBox="0 0 16 16" preserveAspectRatio="none"><rect x="3.300" y="3.300" width="8.600" height="8.600" fill="url(#gSq)" stroke="#7f9fe8" stroke-width=".6"/><path d="M12 3.300v8.700H3.300" fill="none" stroke="#1c3a98" stroke-width="1.100"/></svg></div>
<div class="tl" style="left:43.0px;top:1057px;letter-spacing:0.163px;">lin2time : clockLinsecToTime</div>
<div class="hdot" style="left:12px;top:1066px;width:10px"></div>
<div class="ti" style="left:22px;top:1078px"><svg width="16" height="16" viewBox="0 0 16 16" preserveAspectRatio="none"><rect x="3.300" y="3.300" width="8.600" height="8.600" fill="url(#gSq)" stroke="#7f9fe8" stroke-width=".6"/><path d="M12 3.300v8.700H3.300" fill="none" stroke="#1c3a98" stroke-width="1.100"/></svg></div>
<div class="tl" style="left:43.0px;top:1077px;letter-spacing:0.191px;">modbus_rcv : modbusReceive</div>
<div class="hdot" style="left:12px;top:1086px;width:10px"></div>
<div class="ti" style="left:22px;top:1098px"><svg width="16" height="16" viewBox="0 0 16 16" preserveAspectRatio="none"><rect x="3.300" y="3.300" width="8.600" height="8.600" fill="url(#gSq)" stroke="#7f9fe8" stroke-width=".6"/><path d="M12 3.300v8.700H3.300" fill="none" stroke="#1c3a98" stroke-width="1.100"/></svg></div>
<div class="tl" style="left:43.0px;top:1097px;letter-spacing:0.265px;">energy_office : energymeter</div>
<div class="hdot" style="left:12px;top:1106px;width:10px"></div>
<div class="ti" style="left:22px;top:1118px"><svg width="16" height="16" viewBox="0 0 16 16" preserveAspectRatio="none"><rect x="3.300" y="3.300" width="8.600" height="8.600" fill="url(#gSq)" stroke="#7f9fe8" stroke-width=".6"/><path d="M12 3.300v8.700H3.300" fill="none" stroke="#1c3a98" stroke-width="1.100"/></svg></div>
<div class="tl" style="left:43.0px;top:1117px;letter-spacing:0.288px;">energy_heatpump : energymeter</div>
<div class="hdot" style="left:12px;top:1126px;width:10px"></div>
<div class="ti" style="left:22px;top:1138px"><svg width="16" height="16" viewBox="0 0 16 16" preserveAspectRatio="none"><rect x="3.300" y="3.300" width="8.600" height="8.600" fill="url(#gSq)" stroke="#7f9fe8" stroke-width=".6"/><path d="M12 3.300v8.700H3.300" fill="none" stroke="#1c3a98" stroke-width="1.100"/></svg></div>
<div class="tl" style="left:43.0px;top:1137px;letter-spacing:0.371px;">mqtt : INT</div>
<div class="hdot" style="left:12px;top:1146px;width:10px"></div>
<div class="exp" style="left:7px;top:762px"><svg width="9" height="9" viewBox="0 0 9 9" preserveAspectRatio="none"><rect x=".5" y=".5" width="8" height="8" rx="1.200" fill="url(#gEx)" stroke="#919191" stroke-width="1"/><path d="M2 4.500h5M4.500 2v5" stroke="#3a56a8" stroke-width="1"/></svg></div>
<div class="sb" style="left:355px;top:716px;width:18px;height:442px"></div>
<div class="thumb" style="left:355px;top:735px;width:17px;height:171px"></div>
<svg style="left:359px;top:723px" width="9" height="6" viewBox="0 0 9 6"><path d="M.7 5.3L4.5 1.5l3.8 3.8" stroke="#505050" stroke-width="1.8" fill="none"/></svg>
<svg style="left:359px;top:1145px" width="9" height="6" viewBox="0 0 9 6"><path d="M.7 .7L4.5 4.5l3.8-3.8" stroke="#505050" stroke-width="1.8" fill="none"/></svg>

<!-- splitter -->
<div style="left:373px;top:164px;width:4px;height:994px;background:#eef0fa"></div>

<!-- editor tabs -->
<div style="left:377px;top:164px;width:1199px;height:26px;background:#f0f0f0;border-left:1px solid #a0a0a0;border-bottom:1px solid #a0a0a0"></div>
<svg style="left:377px;top:164px" width="260" height="26" viewBox="0 0 260 26">
  <defs><linearGradient id="gTabI" x1="0" y1="0" x2="0" y2="1"><stop offset="0" stop-color="#e6e8f3"/><stop offset=".3" stop-color="#d2d4e4"/><stop offset=".55" stop-color="#aeb1c8"/><stop offset=".8" stop-color="#b9bcd0"/><stop offset="1" stop-color="#c9cbdc"/></linearGradient></defs>
  <path d="M0.5 26L25 2.500H140.500V26" fill="#fff" stroke="none"/>
  <path d="M141 25.500V4.500q0-2 2-2H249.500q2 0 2 2V25.500z" fill="url(#gTabI)" stroke="#8b8ea5"/>
  <path d="M0.500 25.500L25 2.500H138.500q2 0 2 2V26" fill="none" stroke="#5a5a5a"/>
  <path d="M0 25.500h1M141 25.500h119" stroke="#a0a0a0"/>
</svg>
<div class="abs" style="left:406px;top:168px"><svg width="17" height="18" viewBox="0 0 17 18" preserveAspectRatio="none"><path d="M.5 .5h16v10l-1.500 1.500h-3.500v3.500l-1 1-1.200-1h-1.800l-1.200 1-1.200-1H3.300l-1.300 1.200-1.500-1.200z" fill="#d2eeff" stroke="none"/><path d="M.5 .5v14.500l1.500 1.200 1.300-1.200" fill="none" stroke="#8a8a8a" stroke-width="1"/><path d="M.5 .5h16" stroke="#8a8a8a" stroke-width="1"/><path d="M16.500 .5v10l-1.500 1.500h-3.500v3.500l-1 1-1.200-1h-1.800l-1.200 1-1.200-1H3.300" fill="none" stroke="#4a4a4a" stroke-width="1.100"/><path d="M1 1h5v14H1z" fill="#fff" opacity=".55"/><path d="M3 9.500h11M3 12.200h7.500" stroke="#8c8c8c" stroke-width="1"/><g fill="#ff0000"><path d="M1.800 2h1.600v4.200l.6 1 .6-1V2h1.600v4.500L4.800 8h-1.600L1.800 6.500z"/><path d="M6.800 2h3.200l.9.900v2l-.9.900H8.500V8H6.800zM8.500 3.300v1.300h.9V3.300z"/><path d="M11.500 2h1.700v4.600h2V8h-3.700z"/></g></svg></div>
<div class="abs" style="left:525px;top:168px"><svg width="17" height="18" viewBox="0 0 17 18" preserveAspectRatio="none"><path d="M.5 .5h16v10l-1.500 1.500h-3.500v3.500l-1 1-1.200-1h-1.800l-1.200 1-1.200-1H3.300l-1.300 1.200-1.500-1.200z" fill="#d2eeff" stroke="none"/><path d="M.5 .5v14.500l1.500 1.200 1.300-1.200" fill="none" stroke="#8a8a8a" stroke-width="1"/><path d="M.5 .5h16" stroke="#8a8a8a" stroke-width="1"/><path d="M16.500 .5v10l-1.500 1.500h-3.500v3.500l-1 1-1.200-1h-1.800l-1.200 1-1.200-1H3.300" fill="none" stroke="#4a4a4a" stroke-width="1.100"/><path d="M1 1h5v14H1z" fill="#fff" opacity=".55"/><path d="M3 9.500h11M3 12.200h7.500" stroke="#8c8c8c" stroke-width="1"/><g fill="#10b010"><path d="M1.800 2h1.700v6H1.800z"/><path d="M4.500 2h1.500l1.500 3V2h1.500v6H7.500L6 5v3H4.500z"/><path d="M10.800 2h3.200l.9.900v.9h-1.500v-.5h-1.300v3.400h1.300v-.5h1.500v.9l-.9.900h-3.200l-.9-.9V2.900z"/></g></svg></div>
<div class="tl" style="left:434.7px;top:168px;letter-spacing:-0.031px;font-size:12px;font-weight:bold">main.vpl*</div>
<div class="tl" style="left:551.7px;top:168px;letter-spacing:-0.149px;font-size:12px;">el_prices.inc</div>
<svg style="left:501px;top:175px" width="10" height="10" viewBox="0 0 10 10"><path d="M1 1l8 8M9 1l-8 8" stroke="#000" stroke-width="1.6"/></svg>
<div class="tdd" style="left:1559px;top:174px;width:11px;height:6px;clip-path:polygon(0 0,100% 0,50% 100%)"></div>

<!-- editor frame -->
<div style="left:377px;top:190px;width:1199px;height:695px;background:#fff;border:1px solid #a0a0a0;border-top:none;border-right-color:#b0b0b0"></div><div style="left:1572px;top:190px;width:1px;height:694px;background:#e8e8e8"></div>
<div style="left:382px;top:193px;width:1188px;height:686px;border:1px solid #a0a0a0;border-right-color:#e3e3e3;background:#fff"></div><div style="left:383px;top:194px;width:1186px;height:684px;border-left:1px solid #696969;border-top:1px solid #696969"></div>
<div class="code" style="left:384px;top:195px;width:1167px;height:665px;overflow:hidden">
  <div style="left:0;top:0;width:20px;height:665px;background:#f0f0f0"></div>
  <div style="left:20px;top:0;width:16px;height:665px;background:#f8f8f8"></div>
  <div style="left:28px;top:0;width:1px;height:665px;background:#808080"></div>
  <div class="fbox" style="top:22px"></div>
<div class="fbox" style="top:174px"></div>
<div class="fbox" style="top:573px"></div>
<div class="ftick" style="top:142px"></div>
<div class="ftick" style="top:427px"></div>
<div class="ftick" style="top:446px"></div>
  <div class="ln" style="top:0px"></div>
<div class="ln" style="top:19px">      <span class="kw">if</span> <span class="fr">clockNow</span><span class="op">(</span><span class="op">)</span><span class="op">&gt;</span>next<span class="u">_</span>rep <span class="kw">then</span></div>
<div class="ln" style="top:38px">         <span class="fr">DebugMsg</span><span class="op">(</span>message<span class="op">:</span><span class="op">=</span>"<span class="st">thEnergy: Energy consumption report is sent.</span>"<span class="op">)</span><span class="op">;</span></div>
<div class="ln" style="top:57px">         str<span class="op">:</span><span class="op">=</span><span class="fr">strFormat</span><span class="op">(</span>format<span class="op">:</span><span class="op">=</span>"<span class="st">Energy used: \4.\1 kWh</span>"<span class="op">,</span>v4<span class="op">:</span><span class="op">=</span>energy<span class="u">_</span>used<span class="op">/</span><span class="nu">10</span><span class="op">,</span>v1<span class="op">:</span><span class="op">=</span><span class="kw">int</span><span class="op">(</span>energy<span class="u">_</span>used <span class="kw">mod</span> <span class="nu">10</span><span class="op">)</span><span class="op">)</span><span class="op">;</span></div>
<div class="ln" style="top:76px">         <span class="fo">sendSMS</span><span class="op">(</span>msg<span class="op">:</span><span class="op">=</span>str<span class="op">)</span><span class="op">;</span></div>
<div class="ln" style="top:95px">         <span class="fr">SaveString</span><span class="op">(</span>index<span class="op">:</span><span class="op">=</span><span class="nu">1</span><span class="op">,</span>str<span class="op">:</span><span class="op">=</span><span class="fr">dintToStr</span><span class="op">(</span>v<span class="op">:</span><span class="op">=</span>energy<span class="u">_</span>office<span class="op">.</span>m<span class="u">_</span>kWh<span class="op">)</span><span class="op">)</span><span class="op">;</span></div>
<div class="ln" style="top:114px">         next<span class="u">_</span>rep<span class="op">:</span><span class="op">=</span><span class="fo">getNext1inMonth</span><span class="op">(</span><span class="op">)</span><span class="op">;</span></div>
<div class="ln" style="top:133px">      <span class="kw">end<span class="u">_</span>if</span><span class="op">;</span></div>
<div class="ln" style="top:152px"></div>
<div class="ln" style="top:171px">      <span class="kw">if</span> <span class="fr">mqttConnected</span><span class="op">(</span>handle<span class="op">:</span><span class="op">=</span>mqtt<span class="op">)</span> <span class="kw">then</span></div>
<div class="ln" style="top:190px">         str<span class="op">:</span><span class="op">=</span><span class="fr">dintToStr</span><span class="op">(</span>v<span class="op">:</span><span class="op">=</span>energy<span class="u">_</span>office<span class="op">.</span>m<span class="u">_</span>kWh<span class="op">/</span><span class="nu">10</span><span class="op">)</span><span class="op">+</span>"<span class="st">.</span>"<span class="op">+</span><span class="fr">dintToStr</span><span class="op">(</span>v<span class="op">:</span><span class="op">=</span>energy<span class="u">_</span>office<span class="op">.</span>m<span class="u">_</span>kWh <span class="kw">mod</span> <span class="nu">10</span><span class="op">)</span><span class="op">;</span></div>
<div class="ln" style="top:209px">         <span class="fr">strToMemory</span><span class="op">(</span>dst<span class="op">:</span><span class="op">=</span><span class="kw">addr</span><span class="op">(</span>buffer<span class="op">)</span><span class="op">,</span>str<span class="op">:</span><span class="op">=</span>str<span class="op">,</span>len<span class="op">:</span><span class="op">=</span><span class="fr">strLen</span><span class="op">(</span>str<span class="op">:</span><span class="op">=</span>str<span class="op">)</span><span class="op">)</span><span class="op">;</span></div>
<div class="ln" style="top:228px">         rc<span class="op">:</span><span class="op">=</span><span class="fr">mqttPublish</span><span class="op">(</span>handle<span class="op">:</span><span class="op">=</span>mqtt<span class="op">,</span></div>
<div class="ln" style="top:247px">                         topic<span class="op">:</span><span class="op">=</span>"<span class="st">Energy/kWh</span>"<span class="op">,</span></div>
<div class="ln" style="top:266px">                         qos<span class="op">:</span><span class="op">=</span><span class="nu">1</span><span class="op">,</span></div>
<div class="ln" style="top:285px">                         retained<span class="op">:</span><span class="op">=</span><span class="kw">false</span><span class="op">,</span></div>
<div class="ln" style="top:304px">                         data<span class="op">:</span><span class="op">=</span><span class="kw">addr</span><span class="op">(</span>buffer<span class="op">)</span><span class="op">,</span></div>
<div class="ln" style="top:323px">                         size<span class="op">:</span><span class="op">=</span><span class="fr">strLen</span><span class="op">(</span>str<span class="op">:</span><span class="op">=</span>str<span class="op">)</span></div>
<div class="ln" style="top:342px">                         <span class="op">)</span><span class="op">;</span></div>
<div class="ln" style="top:361px">         <span class="kw">if</span> <span class="op">(</span>rc<span class="op">&lt;</span><span class="op">&gt;</span><span class="nu">0</span><span class="op">)</span> <span class="kw">then</span> <span class="fr">DebugFmt</span><span class="op">(</span>message<span class="op">:</span><span class="op">=</span>"<span class="st">mqttPublish rc=\1</span>"<span class="op">,</span>v1<span class="op">:</span><span class="op">=</span>rc<span class="op">)</span><span class="op">;</span> <span class="kw">end<span class="u">_</span>if</span><span class="op">;</span></div>
<div class="ln" style="top:380px">       <span class="kw">else</span></div>
<div class="ln" style="top:399px">         <span class="fr">DebugMsg</span><span class="op">(</span>message<span class="op">:</span><span class="op">=</span>"<span class="st">Not connected to MQTT</span>"<span class="op">)</span><span class="op">;</span></div>
<div class="ln" style="top:418px">      <span class="kw">end<span class="u">_</span>if</span><span class="op">;</span></div>
<div class="ln" style="top:437px">   <span class="kw">END<span class="u">_</span>IF</span><span class="op">;</span></div>
<div class="ln" style="top:456px"></div>
<div class="ln" style="top:475px">   <span class="cm">//</span></div>
<div class="ln" style="top:494px">   <span class="cm">// Heatpump meter connected to Modbus (id=2):</span></div>
<div class="ln" style="top:513px">   <span class="cm">//</span></div>
<div class="ln" style="top:532px">   read<span class="op">(</span>modbus<span class="u">_</span>net<span class="op">:</span><span class="op">=</span>modbus<span class="u">_</span>net<span class="op">,</span>device<span class="op">:</span><span class="op">=</span><span class="nu">2</span><span class="op">,</span>index<span class="op">:</span><span class="op">=</span><span class="nu">16#28</span><span class="op">,</span>length<span class="op">:</span><span class="op">=</span><span class="nu">16</span><span class="op">)</span><span class="op">;</span></div>
<div class="ln" style="top:551px"></div>
<div class="curln" style="top:570px"></div>
<div class="ln" style="top:570px;-webkit-text-stroke-color:#e6e6fa">   <span class="kw">IF</span> read<span class="op">.</span> <span class="kw">THEN</span></div>
<div class="ln" style="top:589px">      <span class="fr">DebugFmt</span><span class="op">(</span>message <span class="op">:</span><span class="op">=</span> "<span class="st">thEnergy(hp): dev \1: Read error=\2</span>"<span class="op">,</span> v1 <span class="op">:</span><span class="op">=</span> <span class="nu">1</span><span class="op">,</span> v2<span class="op">:</span><span class="op">=</span> read<span class="op">.</span>status<span class="op">)</span><span class="op">;</span></div>
<div class="ln" style="top:608px">      energy<span class="u">_</span>heatpump<span class="op">.</span>m<span class="u">_</span>watt<span class="op">:</span><span class="op">=</span><span class="nu">0</span><span class="op">;</span></div>
<div class="ln" style="top:627px">      energy<span class="u">_</span>heatpump<span class="op">.</span>m<span class="u">_</span>hz<span class="op">:</span><span class="op">=</span><span class="nu">0</span><span class="op">;</span></div>
<div class="ln" style="top:646px">      energy<span class="u">_</span>heatpump<span class="op">.</span>m<span class="u">_</span>kWh<span class="op">:</span><span class="op">=</span><span class="nu">0</span><span class="op">;</span></div>
</div>
<!-- editor scrollbars -->
<div class="sb" style="left:1551px;top:195px;width:18px;height:665px"></div>
<div class="thumb" style="left:1551px;top:560px;width:17px;height:20px"></div>
<svg style="left:1555px;top:202px" width="9" height="6" viewBox="0 0 9 6"><path d="M.7 5.3L4.5 1.5l3.8 3.8" stroke="#505050" stroke-width="1.8" fill="none"/></svg>
<svg style="left:1555px;top:847px" width="9" height="6" viewBox="0 0 9 6"><path d="M.7 .7L4.5 4.5l3.8-3.8" stroke="#505050" stroke-width="1.8" fill="none"/></svg>
<div class="sb" style="left:384px;top:860px;width:1185px;height:18px"></div>
<div class="thumb" style="left:403px;top:860px;width:636px;height:18px"></div>
<svg style="left:389px;top:864px" width="6" height="9" viewBox="0 0 6 9"><path d="M5.3 .7L1.5 4.5l3.8 3.8" stroke="#505050" stroke-width="1.8" fill="none"/></svg>
<svg style="left:1538px;top:864px" width="6" height="9" viewBox="0 0 6 9"><path d="M.7 .7L4.5 4.5l-3.8 3.8" stroke="#505050" stroke-width="1.8" fill="none"/></svg>

<!-- device output -->
<div class="phead" style="left:377px;top:889px;width:1199px;height:24px"><div class="ph" style="left:4.1px;top:5px;letter-spacing:0.094px;font-size:12px;">Device output</div><svg style="left:1147px;top:7px" width="50" height="12" viewBox="0 0 50 12"><path d="M0 3h11l-5.500 5.500z" fill="#000"/><path d="M22 1h5v5h1.500v1.300H25.400V11h-1V7.300H20.500V6H22zM25 1.500v4.500" fill="#000" stroke="#000" stroke-width=".4"/><rect x="23" y="2" width="1.500" height="4" fill="#c8d7e8"/><path d="M38.500 1.500l8 8M46.500 1.500l-8 8" stroke="#000" stroke-width="1.700"/></svg></div>
<div style="left:377px;top:914px;width:1199px;height:219px;background:#fff;border:1px solid #a0a0a0"></div>
<div class="olsel" style="top:1087px"></div>
<div class="ol" style="top:919px">19:40:08 -&gt; Hour=19, used=4 (cnt=1193)</div>
<div class="ol" style="top:940px">19:40:18 -&gt; Hour=19, used=4 (cnt=1183)</div>
<div class="ol" style="top:961px">19:40:23 -&gt; thEnergy: m<span class="u">_</span>watt=571</div>
<div class="ol" style="top:982px">19:40:23 -&gt; thEnergy: m<span class="u">_</span>kWh=13181.1</div>
<div class="ol" style="top:1003px">19:40:23 -&gt; thEnergy: Energy used: 23.0 kWh</div>
<div class="ol" style="top:1024px">19:40:23 -&gt; thEnergy: Time to send report=2175578</div>
<div class="ol" style="top:1045px">19:40:28 -&gt; Hour=19, used=4 (cnt=1173)</div>
<div class="ol" style="top:1066px">19:40:38 -&gt; Hour=19, used=4 (cnt=1163)</div>
<div class="ol" style="top:1087px;-webkit-text-stroke-color:#f0f0f0">19:40:48 -&gt; Hour=19, used=4 (cnt=1153)</div>
<div style="left:1572px;top:915px;width:3px;height:217px;background:#eef0fa"></div>
<div class="sb" style="left:1554px;top:918px;width:18px;height:214px"></div>
<div class="thumb" style="left:1554px;top:1068px;width:17px;height:24px"></div>
<svg style="left:1558px;top:925px" width="9" height="6" viewBox="0 0 9 6"><path d="M.7 5.3L4.5 1.5l3.8 3.8" stroke="#505050" stroke-width="1.8" fill="none"/></svg>
<svg style="left:1558px;top:1098px" width="9" height="6" viewBox="0 0 9 6"><path d="M.7 .7L4.5 4.5l3.8-3.8" stroke="#505050" stroke-width="1.8" fill="none"/></svg>
<div class="sb" style="left:381px;top:1112px;width:1191px;height:20px"></div>
<div class="thumb" style="left:400px;top:1113px;width:578px;height:17px"></div>
<svg style="left:387px;top:1116px" width="6" height="9" viewBox="0 0 6 9"><path d="M5.3 .7L1.5 4.5l3.8 3.8" stroke="#505050" stroke-width="1.8" fill="none"/></svg>
<svg style="left:1541px;top:1116px" width="6" height="9" viewBox="0 0 6 9"><path d="M.7 .7L4.5 4.5l-3.8 3.8" stroke="#505050" stroke-width="1.8" fill="none"/></svg>
<!-- output tabs -->
<div style="left:379px;top:1133px;width:60px;height:21px;background:#f0f0f0;border:1px solid #dcdcdc;border-top:none"></div>
<div style="left:438px;top:1133px;width:55px;height:21px;background:#f0f0f0;border:1px solid #dcdcdc;border-top:none"></div>
<div style="left:492px;top:1133px;width:112px;height:22px;background:#fff;border:1px solid #d9d9d9;border-top:none"></div>
<div class="abs" style="left:385px;top:1137px"><svg width="15" height="16" viewBox="0 0 15 16"><rect x=".5" y=".5" width="13" height="14" fill="#f4f6fb" stroke="#5a6a9a"/><rect x="1" y="1" width="12" height="3" fill="#5b82e6"/><path d="M3 6.500h8M3 8.500h8M3 10.500h8M3 12.500h8" stroke="#7a7a8a" stroke-width="1"/><path d="M14 2v13.500H2" fill="none" stroke="#9aa" stroke-width=".8"/></svg></div>
<div class="abs" style="left:444px;top:1137px"><svg width="15" height="16" viewBox="0 0 15 16"><rect x=".5" y=".5" width="13" height="14" fill="#f4f6fb" stroke="#5a6a9a"/><rect x="1" y="1" width="12" height="3" fill="#5b82e6"/><path d="M3 6.500h8M3 8.500h8M3 10.500h8M3 12.500h8" stroke="#7a7a8a" stroke-width="1"/><path d="M14 2v13.500H2" fill="none" stroke="#9aa" stroke-width=".8"/></svg></div>
<div class="abs" style="left:498px;top:1138px"><svg width="15" height="16" viewBox="0 0 15 16"><rect x=".5" y=".5" width="13" height="14" fill="#f4f6fb" stroke="#5a6a9a"/><rect x="1" y="1" width="12" height="3" fill="#5b82e6"/><path d="M3 6.500h8M3 8.500h8M3 10.500h8M3 12.500h8" stroke="#7a7a8a" stroke-width="1"/><path d="M14 2v13.500H2" fill="none" stroke="#9aa" stroke-width=".8"/></svg></div>
<div class="tl" style="left:402.8px;top:1134px;letter-spacing:0.079px;font-size:12px;color:#6d6d6d">Build</div>
<div class="tl" style="left:461.8px;top:1134px;letter-spacing:-0.014px;font-size:12px;color:#6d6d6d">Find</div>
<div class="tl" style="left:515.9px;top:1135px;letter-spacing:0.086px;font-size:12px;">Device output</div>

<!-- popup -->
<div class="popup">
<div class="pselbg" style="top:6px"></div>
<div class="pi" style="top:9px"><svg width="7" height="11.5" viewBox="0 0 8 11" preserveAspectRatio="none"><path d="M7.500 .3L1 5.500l6.500 5.200z" fill="#2a5ae0"/><path d="M6.800 2.500v6L4 5.500z" fill="#5a85f0"/></svg></div>
<div class="pt psel" style="top:6px">data</div>
<div class="pi" style="top:28px"><svg width="7" height="11.5" viewBox="0 0 8 11" preserveAspectRatio="none"><path d="M.5 .3l6.500 5.200-6.500 5.200z" fill="#2a5ae0"/><path d="M1.200 2v7l2.500-3.500z" fill="#7aa0f5"/></svg></div>
<div class="pt" style="top:25px">device</div>
<div class="pi" style="top:47px"><svg width="7" height="11.5" viewBox="0 0 8 11" preserveAspectRatio="none"><path d="M.5 .3l6.500 5.200-6.500 5.200z" fill="#2a5ae0"/><path d="M1.200 2v7l2.500-3.500z" fill="#7aa0f5"/></svg></div>
<div class="pt" style="top:44px">index</div>
<div class="pi" style="top:66px"><svg width="7" height="11.5" viewBox="0 0 8 11" preserveAspectRatio="none"><path d="M.5 .3l6.500 5.200-6.500 5.200z" fill="#2a5ae0"/><path d="M1.200 2v7l2.500-3.500z" fill="#7aa0f5"/></svg></div>
<div class="pt" style="top:63px">length</div>
<div class="pi" style="top:85px"><svg width="7" height="11.5" viewBox="0 0 8 11" preserveAspectRatio="none"><path d="M.5 .3l6.500 5.200-6.500 5.200z" fill="#2a5ae0"/><path d="M1.200 2v7l2.500-3.500z" fill="#7aa0f5"/></svg></div>
<div class="pt" style="top:82px">modbus<span class="u">_</span>net</div>
<div class="pi" style="top:104px"><svg width="7" height="11.5" viewBox="0 0 8 11" preserveAspectRatio="none"><path d="M7.500 .3L1 5.500l6.500 5.200z" fill="#2a5ae0"/><path d="M6.800 2.500v6L4 5.500z" fill="#5a85f0"/></svg></div>
<div class="pt" style="top:101px">status</div>
</div>

<!-- status -->
<div class="status">
  <div class="sl" style="left:3.9px;top:5px;letter-spacing:-0.446px;font-size:12px;">Ready</div>
  <div class="sl" style="left:972.0px;top:5px;letter-spacing:-0.156px;font-size:12px;">Connect time: 00:05:54</div>
  <div class="sl" style="left:1129.0px;top:5px;letter-spacing:-0.326px;font-size:12px;">APP: EnergyAlarm&nbsp; 1.00</div>
  <div class="sl" style="left:1326.9px;top:5px;letter-spacing:-0.645px;font-size:12px;">SER: 344049014&nbsp; FW: 2.50.00&nbsp; TRG: LX5 pro</div>
  <div style="left:1308px;top:5px;width:11px;height:11px;border-radius:6px;background:#22b14c"></div>
  <div style="left:1124px;top:1px;width:1px;height:18px;background:#d0d0d0"></div>
  <div style="left:1302px;top:1px;width:1px;height:18px;background:#d0d0d0"></div>
  <div style="left:1320px;top:1px;width:1px;height:18px;background:#d0d0d0"></div>
  <div style="left:1555px;top:1px;width:1px;height:18px;background:#d0d0d0"></div>
  <svg style="left:1568px;top:13px" width="6" height="6" viewBox="0 0 9 9"><g fill="#bcbcbc"><rect x="6" y="0" width="2" height="2"/><rect x="3" y="3" width="2" height="2"/><rect x="6" y="3" width="2" height="2"/><rect x="0" y="6" width="2" height="2"/><rect x="3" y="6" width="2" height="2"/><rect x="6" y="6" width="2" height="2"/></g></svg>
</div>
</div>
<div class="abs" style="left:1576px;top:1px;width:1px;height:1177px;background:#1883d7"></div>

</body></html>
